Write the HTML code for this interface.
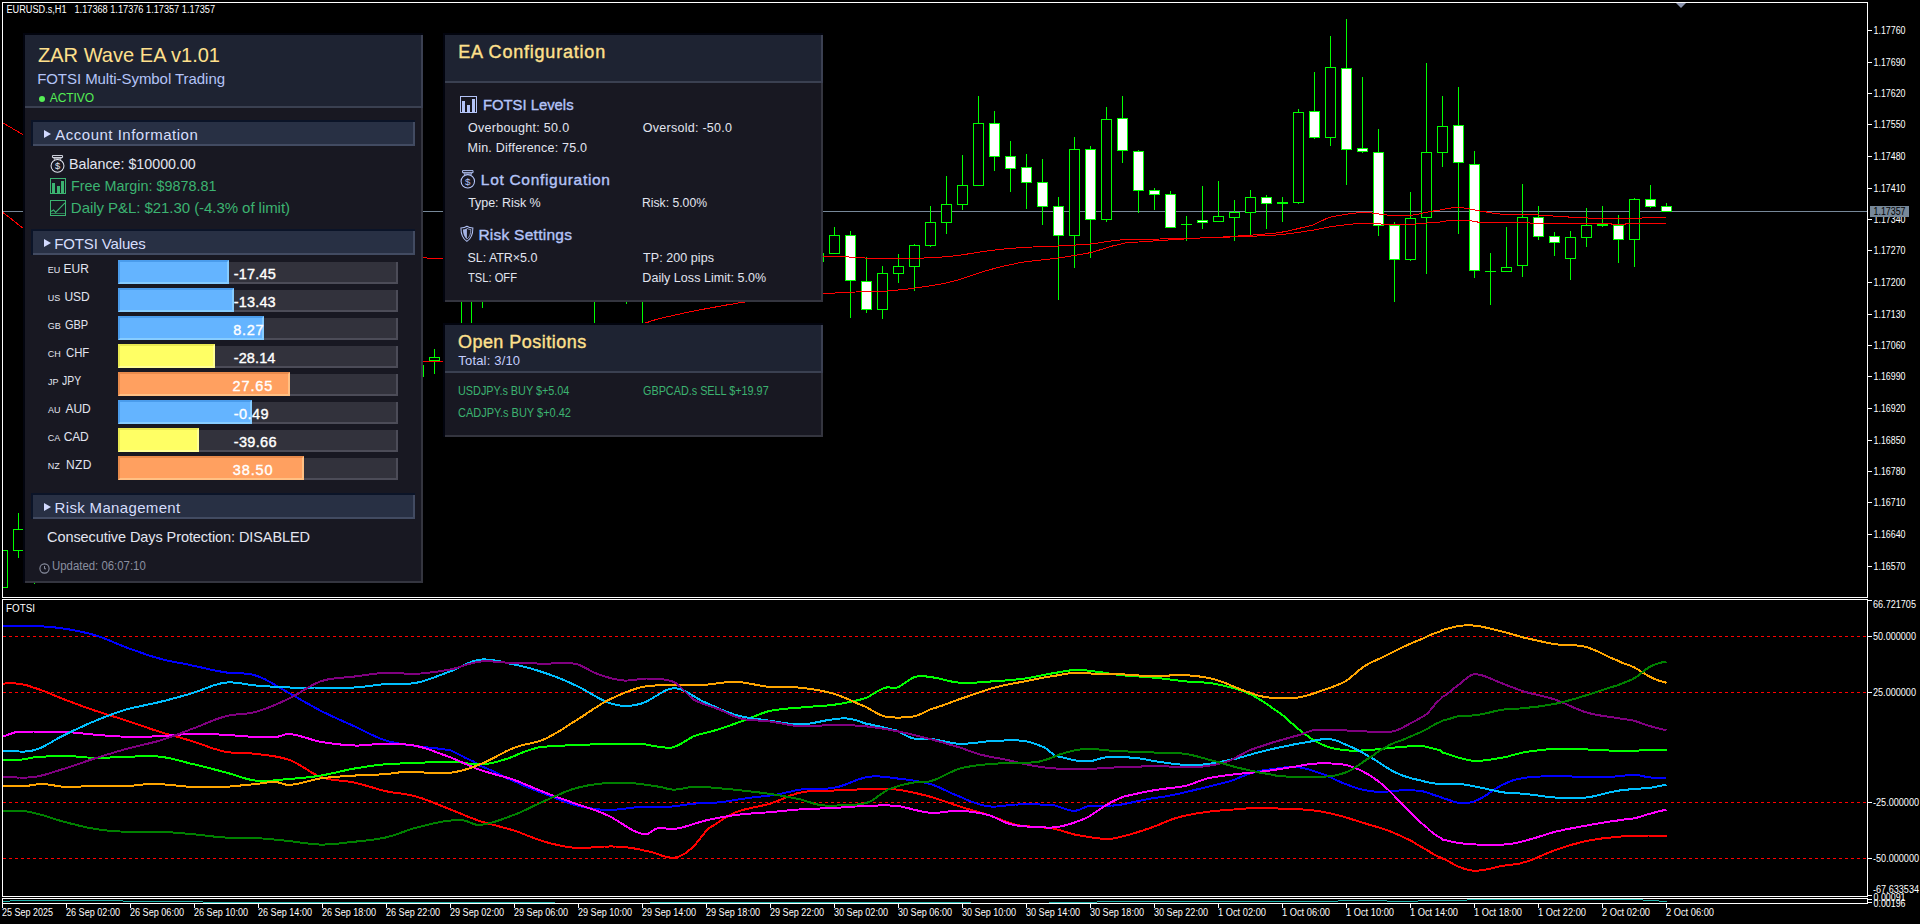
<!DOCTYPE html>
<html lang="en"><head><meta charset="utf-8"><title>EURUSD.s,H1 - ZAR Wave EA v1.01</title>
<style>
html,body{margin:0;padding:0;background:#000}
body{width:1920px;height:924px;position:relative;overflow:hidden;font-family:"Liberation Sans", sans-serif}
.panel{position:absolute;box-sizing:border-box;border:2px solid transparent;background:linear-gradient(#02040e,#02040e) 0 0/2px 100% no-repeat border-box,linear-gradient(#02040e,#02040e) 0 0/100% 2px no-repeat border-box,linear-gradient(#34353f,#34353f) 100% 0/2px 100% no-repeat border-box,linear-gradient(#34353f,#34353f) 0 100%/100% 2px no-repeat border-box,#181822 border-box}
.hd{position:absolute;left:0;top:0;right:0;box-sizing:border-box;background:#1e2332;border-bottom:2px solid #3a4051}
.hd:after{content:"";position:absolute;right:-2px;top:0;bottom:-2px;width:2px;background:#3b4052}
.t{position:absolute;white-space:nowrap;line-height:normal;transform-origin:0 0}
.ic{position:absolute;overflow:visible}
.sect{position:absolute;left:6px;width:384px;height:26px;box-sizing:border-box;background:linear-gradient(#0b1428,#0b1428) 0 0/2px 100% no-repeat,linear-gradient(#0b1428,#0b1428) 0 0/100% 2px no-repeat,linear-gradient(#424b62,#424b62) 100% 0/2px 100% no-repeat,linear-gradient(#424b62,#424b62) 0 100%/100% 2px no-repeat,#283044}
.tri{position:absolute;left:13px;top:10px;width:0;height:0;border-left:7px solid #d2daff;border-top:4px solid transparent;border-bottom:4px solid transparent}
.track{position:absolute;left:93px;width:280px;height:22px;box-sizing:border-box;background:#32323c;border-style:solid;border-width:0 2px 2px 0;border-color:#4c4c58}
.bar{position:absolute;left:93px;height:24px;box-sizing:border-box;border-style:solid;border-width:2px}
.bar.b{background:#64b4ff;border-color:#4a9cec #86ccff #86ccff #4a9cec}
.bar.y{background:#ffff64;border-color:#e8e850 #ffff96 #ffff96 #e8e850}
.bar.o{background:#ffa060;border-color:#e88a4c #ffc084 #ffc084 #e88a4c}
.dot{position:absolute;left:14px;top:60.7px;width:6px;height:6px;border-radius:50%;background:#55ee55}
</style></head><body>
<svg width="1920" height="924" viewBox="0 0 1920 924" style="position:absolute;left:0;top:0" font-family='Liberation Sans, sans-serif'>
<rect x="2" y="2" width="1866" height="1" fill="#ffffff"/>
<rect x="2" y="2" width="1" height="596" fill="#ffffff"/>
<rect x="1867" y="2" width="1" height="596" fill="#ffffff"/>
<rect x="2" y="597" width="1866" height="1" fill="#ffffff"/>
<rect x="2" y="599" width="1866" height="1" fill="#ffffff"/>
<rect x="2" y="599" width="1" height="298" fill="#ffffff"/>
<rect x="1867" y="599" width="1" height="298" fill="#ffffff"/>
<rect x="2" y="896" width="1866" height="1" fill="#ffffff"/>
<rect x="2" y="898" width="1866" height="1" fill="#ffffff"/>
<rect x="2" y="898" width="1" height="6" fill="#ffffff"/>
<rect x="1867" y="898" width="1" height="6" fill="#ffffff"/>
<rect x="2" y="903" width="1866" height="1" fill="#ffffff"/>
<clipPath id="mc"><rect x="3" y="3" width="1864" height="594"/></clipPath><g clip-path="url(#mc)">
<rect x="3" y="211" width="1864" height="1" fill="#778899"/>
<rect x="2" y="550" width="1" height="38" fill="#00ff00"/>
<rect x="-3" y="550" width="11" height="38" fill="#00ff00"/>
<rect x="-2" y="551" width="9" height="36" fill="#000000"/>
<rect x="18" y="513" width="1" height="45" fill="#00ff00"/>
<rect x="13" y="529" width="11" height="22" fill="#00ff00"/>
<rect x="14" y="530" width="9" height="20" fill="#000000"/>
<rect x="34" y="540" width="1" height="44" fill="#00ff00"/>
<rect x="29" y="545" width="11" height="25" fill="#00ff00"/>
<rect x="30" y="546" width="9" height="23" fill="#000000"/>
<rect x="418" y="360" width="1" height="20" fill="#00ff00"/>
<rect x="413" y="365" width="11" height="12" fill="#00ff00"/>
<rect x="414" y="366" width="9" height="10" fill="#000000"/>
<rect x="434" y="349" width="1" height="25" fill="#00ff00"/>
<rect x="429" y="357" width="11" height="4" fill="#00ff00"/>
<rect x="430" y="358" width="9" height="2" fill="#000000"/>
<rect x="466" y="240" width="1" height="100" fill="#00ff00"/>
<rect x="461" y="250" width="11" height="82" fill="#00ff00"/>
<rect x="462" y="251" width="9" height="80" fill="#000000"/>
<rect x="482" y="250" width="1" height="58" fill="#00ff00"/>
<rect x="477" y="260" width="11" height="30" fill="#00ff00"/>
<rect x="478" y="261" width="9" height="28" fill="#000000"/>
<rect x="594" y="280" width="1" height="55" fill="#00ff00"/>
<rect x="589" y="285" width="11" height="11" fill="#00ff00"/>
<rect x="590" y="286" width="9" height="9" fill="#000000"/>
<rect x="626" y="270" width="1" height="34" fill="#00ff00"/>
<rect x="621" y="275" width="11" height="15" fill="#00ff00"/>
<rect x="622" y="276" width="9" height="13" fill="#000000"/>
<rect x="642" y="280" width="1" height="55" fill="#00ff00"/>
<rect x="637" y="285" width="11" height="15" fill="#00ff00"/>
<rect x="638" y="286" width="9" height="13" fill="#000000"/>
<rect x="818" y="250" width="1" height="12" fill="#00ff00"/>
<rect x="813" y="253" width="11" height="9" fill="#00ff00"/>
<rect x="814" y="254" width="9" height="7" fill="#000000"/>
<rect x="834" y="227" width="1" height="27" fill="#00ff00"/>
<rect x="829" y="235" width="11" height="19" fill="#00ff00"/>
<rect x="830" y="236" width="9" height="17" fill="#000000"/>
<rect x="850" y="231" width="1" height="87" fill="#00ff00"/>
<rect x="845" y="235" width="11" height="46" fill="#00ff00"/>
<rect x="846" y="236" width="9" height="44" fill="#ffffff"/>
<rect x="866" y="257" width="1" height="56" fill="#00ff00"/>
<rect x="861" y="281" width="11" height="29" fill="#00ff00"/>
<rect x="862" y="282" width="9" height="27" fill="#ffffff"/>
<rect x="882" y="266" width="1" height="53" fill="#00ff00"/>
<rect x="877" y="273" width="11" height="37" fill="#00ff00"/>
<rect x="878" y="274" width="9" height="35" fill="#000000"/>
<rect x="898" y="254" width="1" height="29" fill="#00ff00"/>
<rect x="893" y="266" width="11" height="8" fill="#00ff00"/>
<rect x="894" y="267" width="9" height="6" fill="#000000"/>
<rect x="914" y="244" width="1" height="47" fill="#00ff00"/>
<rect x="909" y="245" width="11" height="22" fill="#00ff00"/>
<rect x="910" y="246" width="9" height="20" fill="#000000"/>
<rect x="930" y="206" width="1" height="41" fill="#00ff00"/>
<rect x="925" y="222" width="11" height="24" fill="#00ff00"/>
<rect x="926" y="223" width="9" height="22" fill="#000000"/>
<rect x="946" y="176" width="1" height="58" fill="#00ff00"/>
<rect x="941" y="204" width="11" height="19" fill="#00ff00"/>
<rect x="942" y="205" width="9" height="17" fill="#000000"/>
<rect x="962" y="155" width="1" height="55" fill="#00ff00"/>
<rect x="957" y="185" width="11" height="20" fill="#00ff00"/>
<rect x="958" y="186" width="9" height="18" fill="#000000"/>
<rect x="978" y="96" width="1" height="90" fill="#00ff00"/>
<rect x="973" y="123" width="11" height="63" fill="#00ff00"/>
<rect x="974" y="124" width="9" height="61" fill="#000000"/>
<rect x="994" y="111" width="1" height="60" fill="#00ff00"/>
<rect x="989" y="123" width="11" height="34" fill="#00ff00"/>
<rect x="990" y="124" width="9" height="32" fill="#ffffff"/>
<rect x="1010" y="141" width="1" height="51" fill="#00ff00"/>
<rect x="1005" y="156" width="11" height="13" fill="#00ff00"/>
<rect x="1006" y="157" width="9" height="11" fill="#ffffff"/>
<rect x="1026" y="154" width="1" height="55" fill="#00ff00"/>
<rect x="1021" y="167" width="11" height="16" fill="#00ff00"/>
<rect x="1022" y="168" width="9" height="14" fill="#ffffff"/>
<rect x="1042" y="159" width="1" height="66" fill="#00ff00"/>
<rect x="1037" y="182" width="11" height="25" fill="#00ff00"/>
<rect x="1038" y="183" width="9" height="23" fill="#ffffff"/>
<rect x="1058" y="197" width="1" height="103" fill="#00ff00"/>
<rect x="1053" y="206" width="11" height="30" fill="#00ff00"/>
<rect x="1054" y="207" width="9" height="28" fill="#ffffff"/>
<rect x="1074" y="137" width="1" height="131" fill="#00ff00"/>
<rect x="1069" y="149" width="11" height="87" fill="#00ff00"/>
<rect x="1070" y="150" width="9" height="85" fill="#000000"/>
<rect x="1090" y="146" width="1" height="112" fill="#00ff00"/>
<rect x="1085" y="149" width="11" height="71" fill="#00ff00"/>
<rect x="1086" y="150" width="9" height="69" fill="#ffffff"/>
<rect x="1106" y="107" width="1" height="115" fill="#00ff00"/>
<rect x="1101" y="119" width="11" height="101" fill="#00ff00"/>
<rect x="1102" y="120" width="9" height="99" fill="#000000"/>
<rect x="1122" y="96" width="1" height="67" fill="#00ff00"/>
<rect x="1117" y="118" width="11" height="33" fill="#00ff00"/>
<rect x="1118" y="119" width="9" height="31" fill="#ffffff"/>
<rect x="1138" y="150" width="1" height="63" fill="#00ff00"/>
<rect x="1133" y="151" width="11" height="40" fill="#00ff00"/>
<rect x="1134" y="152" width="9" height="38" fill="#ffffff"/>
<rect x="1154" y="188" width="1" height="22" fill="#00ff00"/>
<rect x="1149" y="190" width="11" height="5" fill="#00ff00"/>
<rect x="1150" y="191" width="9" height="3" fill="#ffffff"/>
<rect x="1170" y="191" width="1" height="37" fill="#00ff00"/>
<rect x="1165" y="194" width="11" height="34" fill="#00ff00"/>
<rect x="1166" y="195" width="9" height="32" fill="#ffffff"/>
<rect x="1186" y="216" width="1" height="25" fill="#00ff00"/>
<rect x="1181" y="224" width="11" height="1" fill="#00ff00"/>
<rect x="1202" y="186" width="1" height="43" fill="#00ff00"/>
<rect x="1197" y="220" width="11" height="3" fill="#00ff00"/>
<rect x="1198" y="221" width="9" height="1" fill="#ffffff"/>
<rect x="1218" y="181" width="1" height="41" fill="#00ff00"/>
<rect x="1213" y="216" width="11" height="6" fill="#00ff00"/>
<rect x="1214" y="217" width="9" height="4" fill="#000000"/>
<rect x="1234" y="200" width="1" height="41" fill="#00ff00"/>
<rect x="1229" y="212" width="11" height="6" fill="#00ff00"/>
<rect x="1230" y="213" width="9" height="4" fill="#000000"/>
<rect x="1250" y="190" width="1" height="47" fill="#00ff00"/>
<rect x="1245" y="197" width="11" height="16" fill="#00ff00"/>
<rect x="1246" y="198" width="9" height="14" fill="#000000"/>
<rect x="1266" y="195" width="1" height="34" fill="#00ff00"/>
<rect x="1261" y="197" width="11" height="7" fill="#00ff00"/>
<rect x="1262" y="198" width="9" height="5" fill="#ffffff"/>
<rect x="1282" y="197" width="1" height="25" fill="#00ff00"/>
<rect x="1277" y="202" width="11" height="2" fill="#00ff00"/>
<rect x="1298" y="109" width="1" height="95" fill="#00ff00"/>
<rect x="1293" y="112" width="11" height="91" fill="#00ff00"/>
<rect x="1294" y="113" width="9" height="89" fill="#000000"/>
<rect x="1314" y="72" width="1" height="67" fill="#00ff00"/>
<rect x="1309" y="111" width="11" height="27" fill="#00ff00"/>
<rect x="1310" y="112" width="9" height="25" fill="#ffffff"/>
<rect x="1330" y="36" width="1" height="110" fill="#00ff00"/>
<rect x="1325" y="67" width="11" height="71" fill="#00ff00"/>
<rect x="1326" y="68" width="9" height="69" fill="#000000"/>
<rect x="1346" y="19" width="1" height="166" fill="#00ff00"/>
<rect x="1341" y="68" width="11" height="82" fill="#00ff00"/>
<rect x="1342" y="69" width="9" height="80" fill="#ffffff"/>
<rect x="1362" y="77" width="1" height="76" fill="#00ff00"/>
<rect x="1357" y="148" width="11" height="4" fill="#00ff00"/>
<rect x="1358" y="149" width="9" height="2" fill="#ffffff"/>
<rect x="1378" y="129" width="1" height="107" fill="#00ff00"/>
<rect x="1373" y="152" width="11" height="74" fill="#00ff00"/>
<rect x="1374" y="153" width="9" height="72" fill="#ffffff"/>
<rect x="1394" y="222" width="1" height="80" fill="#00ff00"/>
<rect x="1389" y="225" width="11" height="35" fill="#00ff00"/>
<rect x="1390" y="226" width="9" height="33" fill="#ffffff"/>
<rect x="1410" y="192" width="1" height="69" fill="#00ff00"/>
<rect x="1405" y="218" width="11" height="42" fill="#00ff00"/>
<rect x="1406" y="219" width="9" height="40" fill="#000000"/>
<rect x="1426" y="63" width="1" height="211" fill="#00ff00"/>
<rect x="1421" y="152" width="11" height="66" fill="#00ff00"/>
<rect x="1422" y="153" width="9" height="64" fill="#000000"/>
<rect x="1442" y="96" width="1" height="71" fill="#00ff00"/>
<rect x="1437" y="126" width="11" height="27" fill="#00ff00"/>
<rect x="1438" y="127" width="9" height="25" fill="#000000"/>
<rect x="1458" y="87" width="1" height="147" fill="#00ff00"/>
<rect x="1453" y="125" width="11" height="38" fill="#00ff00"/>
<rect x="1454" y="126" width="9" height="36" fill="#ffffff"/>
<rect x="1474" y="151" width="1" height="127" fill="#00ff00"/>
<rect x="1469" y="164" width="11" height="107" fill="#00ff00"/>
<rect x="1470" y="165" width="9" height="105" fill="#ffffff"/>
<rect x="1490" y="253" width="1" height="52" fill="#00ff00"/>
<rect x="1485" y="271" width="11" height="1" fill="#00ff00"/>
<rect x="1506" y="227" width="1" height="45" fill="#00ff00"/>
<rect x="1501" y="267" width="11" height="5" fill="#00ff00"/>
<rect x="1502" y="268" width="9" height="3" fill="#000000"/>
<rect x="1522" y="184" width="1" height="93" fill="#00ff00"/>
<rect x="1517" y="217" width="11" height="49" fill="#00ff00"/>
<rect x="1518" y="218" width="9" height="47" fill="#000000"/>
<rect x="1538" y="206" width="1" height="34" fill="#00ff00"/>
<rect x="1533" y="217" width="11" height="20" fill="#00ff00"/>
<rect x="1534" y="218" width="9" height="18" fill="#ffffff"/>
<rect x="1554" y="232" width="1" height="24" fill="#00ff00"/>
<rect x="1549" y="236" width="11" height="7" fill="#00ff00"/>
<rect x="1550" y="237" width="9" height="5" fill="#ffffff"/>
<rect x="1570" y="231" width="1" height="49" fill="#00ff00"/>
<rect x="1565" y="237" width="11" height="22" fill="#00ff00"/>
<rect x="1566" y="238" width="9" height="20" fill="#000000"/>
<rect x="1586" y="208" width="1" height="39" fill="#00ff00"/>
<rect x="1581" y="225" width="11" height="13" fill="#00ff00"/>
<rect x="1582" y="226" width="9" height="11" fill="#000000"/>
<rect x="1602" y="206" width="1" height="21" fill="#00ff00"/>
<rect x="1597" y="224" width="11" height="2" fill="#00ff00"/>
<rect x="1618" y="215" width="1" height="48" fill="#00ff00"/>
<rect x="1613" y="225" width="11" height="15" fill="#00ff00"/>
<rect x="1614" y="226" width="9" height="13" fill="#ffffff"/>
<rect x="1634" y="198" width="1" height="69" fill="#00ff00"/>
<rect x="1629" y="199" width="11" height="41" fill="#00ff00"/>
<rect x="1630" y="200" width="9" height="39" fill="#000000"/>
<rect x="1650" y="185" width="1" height="23" fill="#00ff00"/>
<rect x="1645" y="199" width="11" height="8" fill="#00ff00"/>
<rect x="1646" y="200" width="9" height="6" fill="#ffffff"/>
<rect x="1666" y="203" width="1" height="9" fill="#00ff00"/>
<rect x="1661" y="206" width="11" height="6" fill="#00ff00"/>
<rect x="1662" y="207" width="9" height="4" fill="#ffffff"/>
<g shape-rendering="crispEdges">
<polyline points="-16.0,112.0 -11.2,114.0 -6.5,116.8 -1.8,120.0 3.0,123.0 7.8,125.8 12.5,128.5 17.2,131.2 22.0,134.0 26.8,136.1 31.5,137.7 36.2,140.2 41.0,145.0 45.2,146.4 49.3,148.0 53.5,149.7 57.6,151.5 61.8,153.4 65.9,155.4 70.1,157.5 74.3,159.6 78.4,161.9 82.6,164.1 86.7,166.5 90.9,168.8 95.1,171.2 99.2,173.5 103.4,175.9 107.5,178.2 111.7,180.5 115.8,182.8 120.0,185.0 124.1,186.3 128.1,187.6 132.2,189.0 136.2,190.4 140.3,191.8 144.4,193.2 148.4,194.6 152.5,196.0 156.6,197.5 160.6,198.9 164.7,200.4 168.8,201.8 172.8,203.3 176.9,204.7 180.9,206.2 185.0,207.6 189.1,209.1 193.1,210.5 197.2,211.9 201.2,213.3 205.3,214.7 209.4,216.0 213.4,217.3 217.5,218.7 221.6,219.9 225.6,221.2 229.7,222.4 233.8,223.6 237.8,224.8 241.9,225.9 245.9,227.0 250.0,228.0 254.0,229.3 258.0,230.5 262.0,231.7 266.0,232.9 270.0,234.0 274.0,235.1 278.0,236.1 282.0,237.1 286.0,238.1 290.0,239.0 294.0,239.9 298.0,240.8 302.0,241.6 306.0,242.5 310.0,243.3 314.0,244.0 318.0,244.8 322.0,245.5 326.0,246.2 330.0,246.9 334.0,247.5 338.0,248.2 342.0,248.8 346.0,249.4 350.0,250.0 354.1,250.8 358.1,251.5 362.2,252.2 366.2,252.8 370.3,253.3 374.3,253.8 378.4,254.3 382.4,254.7 386.5,255.1 390.6,255.4 394.6,255.7 398.7,256.0 402.7,256.3 406.8,256.6 410.8,256.8 414.9,257.0 418.9,257.3 423.0,257.5 427.0,258.0 431.0,258.2 435.0,258.1 439.0,258.1 443.0,258.3 447.0,258.4 451.1,258.5 455.1,258.6 459.1,258.7 463.2,258.8 467.2,258.9 471.2,259.1 475.3,259.2 479.3,259.4 483.3,259.5 487.4,259.7 491.4,259.8 495.4,260.0 499.5,260.1 503.5,260.3 507.6,260.4 511.6,260.6 515.6,260.7 519.7,260.9 523.7,261.0 527.7,261.2 531.8,261.3 535.8,261.4 539.8,261.5 543.9,261.7 547.9,261.8 551.9,261.8 556.0,261.9 560.0,262.0 564.0,262.1 568.0,262.1 572.0,262.2 576.0,262.2 580.0,262.2 584.0,262.3 588.0,262.3 592.0,262.4 596.0,262.4 600.0,262.4 604.0,262.5 608.0,262.5 612.0,262.5 616.0,262.5 620.0,262.5 624.0,262.5 628.0,262.6 632.0,262.6 636.0,262.6 640.0,262.6 644.0,262.6 648.0,262.5 652.0,262.5 656.0,262.5 660.0,262.5 664.0,262.5 668.0,262.4 672.0,262.4 676.0,262.4 680.0,262.3 684.0,262.3 688.0,262.2 692.0,262.1 696.0,262.1 700.0,262.0 704.1,261.9 708.2,261.8 712.3,261.7 716.4,261.5 720.5,261.4 724.6,261.2 728.7,261.0 732.8,260.8 736.9,260.6 741.0,260.4 745.1,260.2 749.2,260.0 753.3,259.8 757.4,259.6 761.5,259.4 765.6,259.1 769.7,258.9 773.8,258.7 777.9,258.5 782.0,258.3 786.1,258.1 790.2,257.9 794.3,257.7 798.4,257.5 802.5,257.3 806.6,257.2 810.7,257.0 814.8,256.9 818.9,256.8 823.0,256.7 827.0,256.3 831.0,256.3 835.0,256.4 839.0,256.6 843.0,256.7 847.2,256.9 851.5,257.2 855.8,257.5 860.0,257.7 865.0,258.0 870.0,258.2 874.2,258.2 878.3,258.3 882.5,258.3 886.7,258.3 890.8,258.3 895.0,258.4 899.2,258.4 903.3,258.4 907.5,258.4 911.7,258.3 915.8,258.3 920.0,258.2 924.1,258.0 928.2,257.9 932.4,257.7 936.5,257.4 940.6,257.1 944.8,256.8 948.9,256.4 953.0,256.0 957.2,255.5 961.5,254.9 965.8,254.3 970.0,253.6 974.2,252.9 978.5,252.2 982.8,251.6 987.0,251.0 991.1,250.5 995.2,250.0 999.4,249.6 1003.5,249.1 1007.6,248.7 1011.8,248.4 1015.9,248.0 1020.0,247.7 1024.2,247.4 1028.4,247.2 1032.7,247.0 1036.9,246.9 1041.1,246.7 1045.3,246.5 1049.6,246.4 1053.8,246.2 1058.0,246.0 1062.0,245.8 1066.0,245.6 1070.0,245.4 1074.0,245.1 1078.0,244.9 1082.0,244.6 1086.0,244.3 1090.0,244.0 1094.3,243.5 1098.6,242.9 1102.9,242.2 1107.1,241.6 1111.4,240.9 1115.7,240.4 1120.0,240.0 1125.0,239.5 1130.0,239.5 1134.3,239.4 1138.6,239.4 1142.9,239.3 1147.1,239.2 1151.4,239.2 1155.7,239.1 1160.0,239.0 1164.0,238.9 1168.0,238.8 1172.0,238.7 1176.0,238.6 1180.0,238.5 1184.0,238.4 1188.0,238.3 1192.0,238.2 1196.0,238.1 1200.0,238.0 1204.3,237.9 1208.6,237.8 1212.9,237.6 1217.1,237.5 1221.4,237.4 1225.7,237.2 1230.0,237.0 1234.2,236.9 1238.3,236.7 1242.5,236.6 1246.7,236.4 1250.8,236.2 1255.0,236.1 1259.2,235.9 1263.3,235.7 1267.5,235.5 1271.7,235.2 1275.8,235.0 1280.0,234.7 1284.1,234.2 1288.2,233.7 1292.4,233.2 1296.5,232.6 1300.6,232.0 1304.8,231.4 1308.9,230.8 1313.0,230.3 1317.2,229.3 1321.5,228.4 1325.8,227.6 1330.0,226.7 1334.1,226.2 1338.2,225.7 1342.4,225.2 1346.5,224.7 1350.6,224.2 1354.8,223.8 1358.9,223.5 1363.0,223.3 1367.5,223.3 1372.0,223.4 1376.5,223.7 1381.0,224.0 1385.5,224.3 1390.0,224.5 1394.6,224.6 1399.2,224.5 1403.8,224.5 1408.4,224.4 1413.0,224.2 1417.2,223.9 1421.5,223.5 1425.8,223.1 1430.0,222.8 1436.0,222.5 1440.0,222.0 1444.0,221.4 1448.0,220.7 1452.0,220.3 1456.7,220.1 1461.3,220.1 1466.0,220.3 1470.0,220.7 1474.0,221.4 1478.0,222.1 1482.0,222.5 1486.3,222.6 1490.5,222.6 1494.8,222.6 1499.1,222.6 1503.4,222.6 1507.6,222.5 1511.9,222.5 1516.2,222.5 1520.5,222.5 1524.7,222.5 1529.0,222.5 1532.0,223.7 1536.2,223.7 1540.3,223.7 1544.5,223.8 1548.6,223.8 1552.8,223.8 1556.9,223.8 1561.1,223.7 1565.3,223.7 1569.4,223.7 1573.6,223.7 1577.7,223.7 1581.9,223.7 1586.1,223.7 1590.2,223.7 1594.4,223.7 1598.5,223.7 1602.7,223.7 1606.8,223.7 1611.0,223.7 1613.0,224.7 1618.5,224.8 1624.0,224.7 1627.0,223.3 1631.3,223.2 1635.7,223.2 1640.0,223.2 1644.3,223.2 1648.7,223.2 1653.0,223.2 1657.3,223.3 1661.7,223.3 1666.0,223.3" fill="none" stroke="#ff0000" stroke-width="1" />
<polyline points="-16.0,197.6 -11.2,200.3 -6.5,204.1 -1.8,208.4 3.0,212.5 7.8,216.2 12.5,219.9 17.2,223.7 22.0,227.4 26.8,230.2 31.5,232.5 36.2,235.9 41.0,242.3 45.2,244.2 49.3,246.3 53.5,248.6 57.6,251.1 61.8,253.8 65.9,256.6 70.1,259.5 74.3,262.5 78.4,265.5 82.6,268.6 86.7,271.8 90.9,274.9 95.1,278.0 99.2,281.1 103.4,284.1 107.5,287.0 111.7,289.8 115.8,292.5 120.0,295.0 124.1,296.4 128.1,297.9 132.2,299.3 136.2,300.7 140.3,302.2 144.4,303.6 148.4,305.0 152.5,306.4 156.6,307.7 160.6,309.1 164.7,310.5 168.8,311.8 172.8,313.1 176.9,314.5 180.9,315.8 185.0,317.0 189.1,318.3 193.1,319.6 197.2,320.8 201.2,322.0 205.3,323.2 209.4,324.4 213.4,325.6 217.5,326.7 221.6,327.8 225.6,328.9 229.7,330.0 233.8,331.0 237.8,332.1 241.9,333.1 245.9,334.0 250.0,335.0 254.0,336.2 258.0,337.3 262.0,338.4 266.0,339.5 270.0,340.5 274.0,341.5 278.0,342.4 282.0,343.3 286.0,344.2 290.0,345.1 294.0,345.9 298.0,346.7 302.0,347.5 306.0,348.2 310.0,348.9 314.0,349.6 318.0,350.3 322.0,350.9 326.0,351.6 330.0,352.2 334.0,352.8 338.0,353.4 342.0,353.9 346.0,354.5 350.0,355.0 354.1,355.7 358.1,356.3 362.2,356.9 366.2,357.5 370.3,358.0 374.3,358.4 378.4,358.8 382.4,359.1 386.5,359.5 390.6,359.8 394.6,360.0 398.7,360.3 402.7,360.5 406.8,360.7 410.8,360.9 414.9,361.1 418.9,361.3 423.0,361.5 427.0,361.9 431.0,361.9 435.0,361.7 439.0,361.6 443.0,362.0 447.1,362.3 451.1,362.7 455.2,363.2 459.3,363.8 463.4,364.4 467.4,365.0 471.5,365.7 475.6,366.3 479.6,366.8 483.7,367.3 487.8,367.7 491.9,367.9 495.9,368.1 500.0,368.0 504.0,367.8 508.0,367.5 512.0,367.2 516.0,366.7 520.0,366.2 524.0,365.6 528.0,365.0 532.0,364.3 536.0,363.5 540.0,362.7 544.0,361.8 548.0,360.9 552.0,360.0 556.0,359.0 560.0,358.0 564.2,356.7 568.3,355.2 572.5,353.6 576.7,351.9 580.8,350.1 585.0,348.3 589.2,346.5 593.3,344.7 597.5,342.9 601.7,341.2 605.8,339.5 610.0,338.0 614.1,336.0 618.2,334.1 622.3,332.2 626.4,330.4 630.6,328.7 634.7,327.0 638.8,325.4 642.9,323.9 647.0,322.5 651.1,321.1 655.2,319.8 659.4,318.7 663.5,317.7 667.6,316.7 671.8,315.8 675.9,314.9 680.0,314.0 684.3,313.0 688.6,312.1 692.9,311.2 697.1,310.4 701.4,309.6 705.7,308.8 710.0,308.0 714.4,307.2 718.9,306.4 723.3,305.6 727.7,304.8 732.1,304.1 736.6,303.3 741.0,302.5 745.1,302.0 749.2,301.6 753.2,301.1 757.3,300.6 761.4,300.1 765.5,299.6 769.6,299.1 773.7,298.7 777.8,298.2 781.8,297.8 785.9,297.4 790.0,297.0 794.1,296.5 798.2,296.0 802.4,295.6 806.5,295.2 810.6,294.8 814.8,294.5 818.9,294.1 823.0,293.8 827.1,293.5 831.2,293.3 835.3,293.0 839.4,292.8 843.6,292.5 847.7,292.3 851.8,292.1 855.9,292.0 860.0,291.8 864.5,291.6 869.0,291.6 873.5,291.5 878.0,291.4 882.5,291.3 887.0,291.0 891.1,290.7 895.2,290.3 899.4,289.9 903.5,289.5 907.6,289.0 911.8,288.5 915.9,287.9 920.0,287.3 924.1,286.7 928.2,286.1 932.4,285.4 936.5,284.7 940.6,284.0 944.8,283.2 948.9,282.3 953.0,281.3 957.2,280.2 961.5,278.9 965.8,277.5 970.0,276.0 974.2,274.5 978.5,273.1 982.8,271.7 987.0,270.5 991.1,269.4 995.2,268.3 999.4,267.2 1003.5,266.2 1007.6,265.3 1011.8,264.4 1015.9,263.5 1020.0,262.7 1024.2,262.0 1028.4,261.5 1032.7,260.9 1036.9,260.4 1041.1,260.0 1045.3,259.5 1049.6,259.0 1053.8,258.5 1058.0,258.0 1062.0,257.4 1066.0,256.8 1070.0,256.2 1074.0,255.6 1078.0,254.9 1082.0,254.3 1086.0,253.5 1090.0,252.7 1094.3,251.6 1098.6,250.3 1102.9,249.0 1107.1,247.6 1111.4,246.3 1115.7,245.2 1120.0,244.3 1125.0,243.0 1130.0,242.5 1134.3,242.2 1138.6,242.0 1142.9,241.7 1147.1,241.4 1151.4,241.1 1155.7,240.8 1160.0,240.5 1164.0,240.3 1168.0,240.0 1172.0,239.8 1176.0,239.5 1180.0,239.2 1184.0,239.0 1188.0,238.7 1192.0,238.4 1196.0,238.2 1200.0,238.0 1204.3,237.8 1208.6,237.6 1212.9,237.4 1217.1,237.3 1221.4,237.1 1225.7,236.8 1230.0,236.5 1234.2,236.3 1238.3,236.0 1242.5,235.8 1246.7,235.5 1250.8,235.2 1255.0,234.9 1259.2,234.5 1263.3,234.2 1267.5,233.8 1271.7,233.4 1275.8,233.0 1280.0,232.5 1284.1,231.7 1288.2,230.9 1292.4,230.0 1296.5,229.0 1300.6,228.0 1304.8,227.0 1308.9,226.0 1313.0,225.0 1317.2,223.0 1321.5,220.9 1325.8,218.9 1330.0,217.2 1334.1,216.4 1338.2,215.6 1342.4,214.9 1346.5,214.2 1350.6,213.6 1354.8,213.1 1358.9,212.7 1363.0,212.5 1367.5,212.6 1372.0,213.0 1376.5,213.6 1381.0,214.3 1385.5,214.9 1390.0,215.3 1394.6,215.5 1399.2,215.5 1403.8,215.5 1408.4,215.3 1413.0,215.0 1417.2,214.3 1421.5,213.4 1425.8,212.4 1430.0,211.7 1436.0,210.5 1440.4,209.9 1444.8,209.1 1449.2,208.3 1453.6,207.7 1458.0,207.5 1462.2,207.8 1466.4,208.4 1470.6,209.2 1474.8,210.0 1479.0,210.8 1483.6,211.5 1488.2,212.3 1492.8,213.1 1497.4,213.7 1502.0,214.2 1506.5,214.4 1511.0,214.5 1515.5,214.5 1520.0,214.5 1524.5,214.4 1529.0,214.5 1533.2,214.7 1537.5,214.9 1541.8,215.2 1546.0,215.5 1550.0,215.8 1554.0,216.1 1558.0,216.4 1562.0,216.7 1566.2,216.9 1570.5,217.1 1574.8,217.3 1579.0,217.6 1583.2,217.8 1587.5,218.0 1591.8,218.2 1596.0,218.3 1600.1,218.4 1604.2,218.4 1608.3,218.4 1612.4,218.5 1616.5,218.5 1620.5,218.4 1624.6,218.4 1628.7,218.4 1632.8,218.4 1636.9,218.3 1641.0,218.3 1644.0,217.5 1648.4,217.4 1652.8,217.4 1657.2,217.5 1661.6,217.5 1666.0,217.5" fill="none" stroke="#ff0000" stroke-width="1" />
</g>
</g>
<polygon points="1676,3 1686,3 1681,8" fill="#8a93ad"/>
<line x1="3" y1="636.5" x2="1867" y2="636.5" stroke="#ff0000" stroke-width="1" stroke-dasharray="3 3" shape-rendering="crispEdges"/>
<line x1="3" y1="692.5" x2="1867" y2="692.5" stroke="#ff0000" stroke-width="1" stroke-dasharray="3 3" shape-rendering="crispEdges"/>
<line x1="3" y1="802.5" x2="1867" y2="802.5" stroke="#ff0000" stroke-width="1" stroke-dasharray="3 3" shape-rendering="crispEdges"/>
<line x1="3" y1="858.5" x2="1867" y2="858.5" stroke="#ff0000" stroke-width="1" stroke-dasharray="3 3" shape-rendering="crispEdges"/>
<g shape-rendering="crispEdges" stroke-linejoin="round">
<polyline points="2.8,625.9 4.9,625.9 6.9,625.9 9.0,625.8 11.1,625.8 13.1,625.8 15.2,625.7 17.3,625.7 19.3,625.7 21.4,625.7 23.4,625.7 25.5,625.7 27.6,625.7 29.6,625.7 31.7,625.8 33.8,625.9 35.8,626.0 37.9,626.1 40.0,626.2 42.0,626.3 44.1,626.5 46.1,626.6 48.2,626.8 50.3,627.0 52.3,627.1 54.4,627.4 56.5,627.6 58.5,627.8 60.6,628.1 62.7,628.4 64.7,628.7 66.8,629.0 68.8,629.4 70.9,629.7 73.0,630.1 75.0,630.5 77.1,630.9 79.2,631.3 81.2,631.7 83.3,632.2 85.3,632.7 87.4,633.2 89.5,633.7 91.5,634.2 93.6,634.8 95.7,635.4 97.7,636.1 99.8,636.8 101.9,637.5 103.9,638.3 106.0,639.1 108.0,639.9 110.1,640.8 112.2,641.6 114.2,642.5 116.3,643.4 118.4,644.2 120.4,645.1 122.5,645.9 124.6,646.8 126.6,647.5 128.7,648.3 130.8,649.0 132.9,649.8 135.1,650.5 137.2,651.3 139.3,652.0 141.4,652.8 143.5,653.5 145.6,654.3 147.7,655.0 149.8,655.7 151.9,656.3 154.1,657.0 156.2,657.6 158.3,658.2 160.4,658.8 162.4,659.4 164.5,659.9 166.6,660.4 168.6,660.9 170.7,661.3 172.8,661.7 174.8,662.1 176.9,662.5 179.0,662.9 181.0,663.2 183.1,663.6 185.1,664.0 187.2,664.4 189.3,664.8 191.3,665.3 193.4,665.7 195.6,666.1 197.7,666.6 199.8,667.1 201.9,667.6 204.0,668.0 206.1,668.5 208.2,669.0 210.3,669.5 212.4,669.9 214.5,670.4 216.7,670.8 218.8,671.2 220.9,671.6 223.0,672.0 225.1,672.3 227.2,672.6 229.2,672.8 231.3,673.0 233.4,673.1 235.4,673.2 237.5,673.2 239.5,673.3 241.6,673.4 243.7,673.5 245.7,673.6 247.8,673.8 249.9,674.1 251.9,674.5 254.0,675.0 256.0,675.7 258.2,676.4 260.3,677.2 262.4,678.1 264.5,679.1 266.6,680.2 268.7,681.3 270.8,682.5 272.9,683.7 275.0,684.9 277.2,686.2 279.3,687.4 281.4,688.7 283.5,689.9 285.6,691.1 287.7,692.3 289.8,693.4 291.9,694.6 293.9,695.8 296.0,696.9 298.1,698.1 300.1,699.3 302.2,700.5 304.3,701.7 306.3,702.9 308.4,704.0 310.4,705.2 312.5,706.3 314.6,707.5 316.6,708.6 318.7,709.7 320.8,710.9 322.9,711.9 325.0,712.9 327.1,713.9 329.2,714.9 331.3,715.9 333.4,716.9 335.5,717.8 337.6,718.8 339.8,719.8 341.9,720.7 344.0,721.7 346.1,722.6 348.2,723.5 350.3,724.5 352.4,725.4 354.5,726.3 356.6,727.3 358.7,728.3 360.7,729.4 362.8,730.4 364.8,731.4 366.9,732.5 369.0,733.5 371.0,734.5 373.1,735.4 375.2,736.4 377.2,737.3 379.3,738.1 381.4,739.0 383.4,739.7 385.5,740.4 387.5,741.0 389.6,741.6 391.7,742.1 393.7,742.5 395.8,743.0 397.9,743.3 399.9,743.7 402.0,744.0 404.1,744.3 406.1,744.6 408.2,744.8 410.2,745.1 412.3,745.4 414.4,745.7 416.4,746.0 418.5,746.3 420.7,746.6 422.8,746.9 424.9,747.1 427.0,747.4 429.1,747.6 431.2,747.8 433.3,748.0 435.4,748.3 437.5,748.5 439.6,748.8 441.8,749.0 443.9,749.3 446.0,749.6 448.1,749.9 450.2,750.2 452.2,751.1 454.2,752.0 456.2,753.0 458.2,754.0 460.2,755.1 462.3,756.2 464.3,757.3 466.5,758.4 468.8,759.4 471.0,760.4 473.3,761.5 475.5,762.8 477.8,764.1 480.0,765.7 482.1,766.5 484.2,767.3 486.3,768.2 488.4,769.2 490.6,770.1 492.7,771.1 494.8,772.2 496.9,773.2 499.0,774.2 501.1,775.3 503.2,776.3 505.3,777.4 507.4,778.4 509.5,779.3 511.7,780.3 513.8,781.2 515.8,782.1 517.9,783.0 520.0,783.9 522.0,784.8 524.1,785.7 526.1,786.5 528.2,787.4 530.3,788.2 532.3,789.0 534.4,789.8 536.5,790.7 538.5,791.5 540.6,792.3 542.7,793.1 544.7,793.9 546.8,794.7 548.8,795.5 550.9,796.3 553.0,797.1 555.0,798.0 557.1,798.8 559.2,799.6 561.2,800.4 563.3,801.1 565.3,801.9 567.4,802.6 569.5,803.3 571.5,803.9 573.6,804.6 575.7,805.1 577.7,805.6 579.8,806.1 581.9,806.6 583.9,807.1 586.0,807.5 588.0,807.9 590.1,808.2 592.2,808.5 594.2,808.8 596.3,809.1 598.4,809.3 600.4,809.5 602.5,809.7 604.6,809.8 606.6,809.9 608.7,809.9 610.8,809.9 612.9,809.8 615.1,809.7 617.2,809.5 619.3,809.3 621.4,809.0 623.5,808.8 625.6,808.5 627.7,808.3 629.8,808.0 631.9,807.8 634.1,807.5 636.2,807.4 638.3,807.2 640.4,807.1 642.5,807.0 644.6,807.0 646.7,807.0 648.8,807.0 650.9,807.1 653.0,807.1 655.2,807.2 657.3,807.2 659.4,807.3 661.5,807.2 663.6,807.2 665.7,807.1 667.7,806.9 669.7,806.8 671.7,806.5 673.7,806.3 675.8,806.0 677.8,805.8 679.8,805.5 681.8,805.2 683.8,804.9 685.8,804.6 687.8,804.4 689.8,804.1 691.8,803.9 693.8,803.7 696.0,803.5 698.1,803.4 700.2,803.3 702.3,803.2 704.4,803.1 706.5,803.1 708.6,803.0 710.7,802.9 712.8,802.8 714.9,802.7 717.1,802.5 719.2,802.3 721.2,802.1 723.2,801.8 725.2,801.6 727.2,801.3 729.2,801.0 731.2,800.6 733.2,800.3 735.2,800.0 737.3,799.6 739.3,799.3 741.3,799.0 743.3,798.7 745.3,798.4 747.3,798.1 749.3,797.8 751.3,797.6 753.3,797.3 755.3,797.1 757.4,796.9 759.4,796.7 761.4,796.5 763.4,796.3 765.4,796.0 767.4,795.8 769.4,795.6 771.4,795.3 773.4,795.0 775.4,794.7 777.5,794.4 779.5,794.0 781.5,793.6 783.5,793.1 785.5,792.7 787.5,792.2 789.5,791.8 791.5,791.3 793.5,790.9 795.5,790.4 797.5,790.0 799.6,789.7 801.6,789.4 803.6,789.1 805.6,788.9 807.7,788.7 809.8,788.7 811.8,788.6 813.9,788.6 816.0,788.7 818.0,788.7 820.1,788.7 822.1,788.7 824.2,788.7 826.3,788.6 828.3,788.5 830.4,788.3 832.5,788.0 834.5,787.7 836.6,787.2 838.8,786.7 840.9,786.1 843.0,785.4 845.1,784.6 847.2,783.8 849.3,783.0 851.4,782.1 853.5,781.3 855.6,780.5 857.7,779.7 859.9,779.0 862.0,778.4 864.1,777.8 866.2,777.3 868.3,777.0 870.3,776.7 872.3,776.5 874.3,776.4 876.3,776.4 878.3,776.4 880.4,776.5 882.4,776.7 884.4,776.8 886.4,777.1 888.4,777.3 890.4,777.6 892.4,777.9 894.4,778.1 896.4,778.4 898.5,778.6 900.7,778.8 902.8,779.1 904.9,779.3 907.0,779.6 909.1,779.9 911.2,780.2 913.3,780.5 915.4,780.8 917.5,781.2 919.6,781.6 921.8,782.0 923.9,782.5 926.0,782.9 928.1,783.5 930.2,784.0 932.3,784.7 934.5,785.5 936.6,786.3 938.7,787.2 940.8,788.2 943.0,789.2 945.1,790.2 947.2,791.2 949.4,792.2 951.5,793.2 953.6,794.1 955.7,795.0 957.9,795.9 960.0,796.7 962.0,797.6 964.1,798.6 966.1,799.5 968.2,800.3 970.2,801.2 972.3,802.0 974.3,802.7 976.4,803.4 978.4,804.1 980.5,804.6 982.5,805.1 984.5,805.7 986.5,806.1 988.5,806.4 990.5,806.5 992.6,806.6 994.6,806.6 996.6,806.5 998.7,806.4 1000.8,806.2 1002.9,805.9 1005.0,805.6 1007.1,805.3 1009.2,804.9 1011.4,804.7 1013.5,804.6 1015.5,804.5 1017.6,804.5 1019.7,804.4 1021.8,804.4 1023.8,804.4 1025.9,804.4 1028.0,804.4 1030.0,804.3 1032.1,804.4 1034.2,804.4 1036.3,804.4 1038.3,804.4 1040.4,804.5 1042.5,804.5 1044.6,804.6 1046.6,804.7 1048.7,804.8 1050.8,805.0 1052.9,805.1 1055.0,805.5 1057.1,806.1 1059.2,806.8 1061.3,807.5 1063.4,808.3 1065.5,809.0 1067.6,809.7 1069.7,810.2 1071.8,810.6 1074.0,810.7 1076.2,810.6 1078.4,810.0 1080.6,809.2 1082.8,808.3 1085.0,807.3 1087.2,806.5 1089.4,806.0 1091.4,805.8 1093.5,805.7 1095.5,805.6 1097.5,805.6 1099.5,805.6 1101.5,805.6 1103.5,805.6 1105.5,805.6 1107.5,805.6 1109.5,805.6 1111.5,805.5 1113.5,805.5 1115.6,805.3 1117.6,805.1 1119.6,804.9 1121.6,804.5 1123.6,804.2 1125.6,803.8 1127.6,803.4 1129.6,803.0 1131.6,802.5 1133.6,802.1 1135.7,801.6 1137.7,801.1 1139.7,800.7 1141.7,800.3 1143.7,799.9 1145.7,799.5 1147.8,799.1 1149.9,798.7 1152.0,798.4 1154.1,798.1 1156.3,797.8 1158.4,797.5 1160.5,797.2 1162.6,796.8 1164.7,796.5 1166.8,796.1 1168.9,795.7 1171.0,795.3 1173.1,794.9 1175.2,794.5 1177.2,794.0 1179.3,793.6 1181.3,793.1 1183.4,792.7 1185.5,792.2 1187.5,791.7 1189.6,791.2 1191.7,790.7 1193.7,790.2 1195.8,789.7 1197.9,789.2 1199.9,788.7 1202.0,788.2 1204.0,787.7 1206.0,787.2 1208.0,786.7 1210.0,786.3 1212.0,785.8 1214.0,785.3 1216.0,784.8 1218.1,784.3 1220.1,783.8 1222.1,783.3 1224.1,782.8 1226.1,782.3 1228.1,781.7 1230.1,781.2 1232.2,780.5 1234.2,779.7 1236.3,778.9 1238.3,778.0 1240.3,777.2 1242.4,776.3 1244.4,775.5 1246.5,774.7 1248.5,774.0 1250.6,773.3 1252.6,772.8 1254.7,772.1 1256.8,771.5 1259.0,771.1 1261.1,770.7 1263.2,770.3 1265.3,770.0 1267.4,769.7 1269.5,769.4 1271.5,769.2 1273.5,768.9 1275.5,768.7 1277.5,768.4 1279.6,768.1 1281.6,767.8 1283.6,767.6 1285.6,767.4 1287.6,767.2 1289.6,767.1 1291.6,767.0 1293.6,767.0 1295.6,767.0 1297.6,767.1 1299.8,767.4 1301.9,767.7 1304.0,768.2 1306.1,768.7 1308.2,769.3 1310.3,769.9 1312.4,770.6 1314.5,771.3 1316.6,772.0 1318.8,772.7 1320.9,773.4 1323.0,774.2 1325.0,775.0 1327.1,775.8 1329.1,776.7 1331.2,777.7 1333.2,778.7 1335.2,779.6 1337.3,780.6 1339.3,781.5 1341.4,782.4 1343.4,783.2 1345.5,784.0 1347.7,784.9 1349.9,785.7 1352.0,786.5 1354.2,787.3 1356.4,788.0 1358.6,788.6 1360.8,789.2 1363.0,789.7 1365.2,790.2 1367.3,790.6 1369.4,791.0 1371.5,791.3 1373.6,791.5 1375.7,791.7 1377.8,791.8 1379.9,791.9 1382.1,791.9 1384.2,791.8 1386.3,791.7 1388.4,791.5 1390.5,791.3 1392.6,791.0 1394.7,790.8 1396.8,790.6 1398.9,790.5 1401.0,790.4 1403.0,790.4 1405.1,790.4 1407.1,790.3 1409.2,790.3 1411.2,790.3 1413.3,790.4 1415.3,790.5 1417.4,790.6 1419.4,790.8 1421.5,791.0 1423.5,791.5 1425.6,792.0 1427.6,792.7 1429.7,793.4 1431.8,794.2 1433.8,794.9 1435.9,795.6 1438.0,796.2 1440.0,796.7 1442.5,798.1 1444.6,798.6 1446.7,799.2 1448.8,799.9 1451.0,800.7 1453.1,801.5 1455.2,802.1 1457.3,802.6 1459.4,802.9 1461.5,803.0 1463.6,803.1 1465.7,803.1 1467.8,802.9 1469.9,802.6 1472.1,802.1 1474.2,801.4 1476.3,800.3 1478.3,799.6 1480.3,798.6 1482.3,797.6 1484.3,796.4 1486.3,795.1 1488.3,793.8 1490.3,792.4 1492.4,791.0 1494.4,789.7 1496.4,788.3 1498.4,787.1 1500.4,785.9 1502.4,784.9 1504.4,784.0 1506.6,782.9 1508.8,781.9 1511.0,781.0 1513.2,780.3 1515.4,779.7 1517.5,779.2 1519.7,778.7 1521.9,778.3 1524.1,777.8 1526.2,777.6 1528.2,777.3 1530.3,777.2 1532.4,777.0 1534.4,776.8 1536.5,776.7 1538.6,776.6 1540.6,776.5 1542.7,776.4 1544.7,776.3 1546.8,776.3 1548.9,776.2 1550.9,776.2 1553.0,776.2 1555.1,776.1 1557.1,776.1 1559.2,776.1 1561.2,776.2 1563.3,776.2 1565.4,776.3 1567.4,776.4 1569.5,776.4 1571.6,776.5 1573.6,776.6 1575.7,776.7 1577.8,776.8 1579.8,776.9 1581.9,776.9 1583.9,777.0 1586.0,777.0 1588.1,777.0 1590.1,777.0 1592.2,777.0 1594.3,777.0 1596.3,776.9 1598.4,776.9 1600.5,776.9 1602.5,776.8 1604.6,776.8 1606.6,776.7 1608.7,776.7 1610.8,776.6 1612.8,776.6 1614.9,776.5 1617.0,776.4 1619.1,776.2 1621.2,776.0 1623.3,775.7 1625.4,775.4 1627.5,775.1 1629.6,774.9 1631.7,774.7 1633.8,774.7 1636.0,774.9 1638.1,775.2 1640.2,775.6 1642.3,776.0 1644.4,776.5 1646.5,776.9 1648.6,777.3 1650.7,777.5 1653.0,777.7 1655.2,777.7 1657.5,777.7 1659.7,777.7 1662.0,777.6 1664.2,777.6 1666.5,777.5" fill="none" stroke="#0000ff" stroke-width="2" />
<polyline points="2.8,683.6 4.8,683.5 6.8,683.4 8.8,683.3 10.9,683.3 12.9,683.3 14.9,683.3 16.9,683.6 19.0,683.8 21.1,684.1 23.2,684.5 25.3,684.9 27.4,685.5 29.5,686.1 31.7,686.9 33.8,687.8 35.8,688.3 37.9,689.0 40.0,689.7 42.0,690.4 44.1,691.2 46.1,692.0 48.2,692.8 50.3,693.7 52.3,694.5 54.4,695.4 56.5,696.3 58.5,697.1 60.6,698.0 62.7,698.8 64.7,699.6 66.8,700.4 68.8,701.1 70.9,701.9 73.0,702.7 75.0,703.4 77.1,704.2 79.2,705.0 81.2,705.7 83.3,706.5 85.3,707.2 87.4,708.0 89.5,708.7 91.5,709.4 93.6,710.1 95.7,710.9 97.7,711.5 99.8,712.2 101.9,712.9 103.9,713.5 106.0,714.2 108.0,714.8 110.1,715.5 112.2,716.1 114.2,716.7 116.3,717.4 118.4,718.0 120.4,718.7 122.5,719.3 124.6,720.0 126.6,720.7 128.7,721.4 130.8,722.1 132.9,722.8 135.1,723.5 137.2,724.2 139.3,724.9 141.4,725.6 143.5,726.4 145.6,727.1 147.7,727.8 149.8,728.6 151.9,729.3 154.1,730.0 156.2,730.6 158.3,731.3 160.4,732.0 162.4,732.6 164.5,733.3 166.6,733.9 168.6,734.5 170.7,735.1 172.8,735.6 174.8,736.2 176.9,736.8 179.0,737.3 181.0,737.9 183.1,738.5 185.1,739.1 187.2,739.7 189.3,740.3 191.3,741.0 193.4,741.6 195.6,742.3 197.7,743.0 199.8,743.7 201.9,744.5 204.0,745.2 206.1,746.0 208.2,746.7 210.3,747.5 212.4,748.2 214.5,748.9 216.7,749.5 218.8,750.1 220.9,750.7 223.0,751.2 225.1,751.7 227.2,752.0 229.2,752.3 231.3,752.6 233.4,752.8 235.4,752.9 237.5,753.0 239.5,753.0 241.6,753.1 243.7,753.1 245.7,753.2 247.8,753.2 249.9,753.3 251.9,753.5 254.0,753.7 256.0,753.9 258.2,754.2 260.3,754.4 262.4,754.7 264.5,754.9 266.6,755.2 268.7,755.5 270.8,755.8 272.9,756.1 275.0,756.4 277.2,756.8 279.3,757.2 281.4,757.7 283.5,758.2 285.6,758.8 287.7,759.4 289.8,760.1 291.9,760.9 293.9,761.9 296.0,763.0 298.1,764.1 300.1,765.3 302.2,766.6 304.3,767.9 306.3,769.2 308.4,770.5 310.4,771.8 312.5,773.0 314.6,774.1 316.6,775.2 318.7,776.2 320.8,777.0 322.9,777.6 325.0,778.2 327.1,778.7 329.2,779.1 331.3,779.5 333.4,779.8 335.5,780.1 337.6,780.3 339.8,780.6 341.9,780.8 344.0,781.0 346.1,781.3 348.2,781.5 350.3,781.8 352.4,782.2 354.5,782.6 356.6,783.1 358.7,783.6 360.7,784.2 362.8,784.7 364.8,785.3 366.9,785.9 369.0,786.5 371.0,787.1 373.1,787.7 375.2,788.3 377.2,788.9 379.3,789.5 381.4,790.0 383.4,790.6 385.5,791.0 387.5,791.5 389.6,791.9 391.7,792.2 393.7,792.6 395.8,792.9 397.9,793.2 399.9,793.4 402.0,793.7 404.1,794.0 406.1,794.4 408.2,794.7 410.2,795.1 412.3,795.6 414.4,796.1 416.4,796.7 418.5,797.3 420.7,797.9 422.8,798.6 424.9,799.4 427.0,800.1 429.1,800.9 431.2,801.8 433.3,802.6 435.4,803.5 437.5,804.3 439.6,805.2 441.8,806.1 443.9,806.9 446.0,807.7 448.1,808.6 450.2,809.3 452.3,810.2 454.5,811.1 456.6,812.0 458.7,812.8 460.8,813.7 463.0,814.6 465.1,815.5 467.2,816.3 469.4,817.2 471.5,818.0 473.6,818.8 475.7,819.6 477.9,820.4 480.0,821.2 482.1,821.8 484.2,822.4 486.3,823.0 488.4,823.6 490.6,824.2 492.7,824.7 494.8,825.3 496.9,825.8 499.0,826.4 501.1,826.9 503.2,827.5 505.3,828.0 507.4,828.6 509.5,829.2 511.7,829.8 513.8,830.4 515.8,831.1 517.9,831.9 520.0,832.6 522.0,833.4 524.1,834.2 526.1,835.0 528.2,835.9 530.3,836.7 532.3,837.5 534.4,838.2 536.5,839.0 538.5,839.7 540.6,840.4 542.7,841.1 544.7,841.7 546.8,842.3 548.8,842.8 550.9,843.4 553.0,843.9 555.0,844.4 557.1,844.9 559.2,845.4 561.2,845.8 563.3,846.2 565.3,846.6 567.4,846.9 569.5,847.2 571.5,847.5 573.6,847.7 575.7,847.9 577.7,848.0 579.8,848.1 581.9,848.1 583.9,848.0 586.0,847.9 588.0,847.8 590.1,847.6 592.2,847.4 594.2,847.2 596.3,847.1 598.4,846.9 600.4,846.7 602.5,846.6 604.6,846.5 606.6,846.5 608.8,846.5 611.0,846.4 613.2,846.5 615.4,846.5 617.6,846.6 619.7,846.7 621.9,846.9 624.1,847.1 626.3,847.3 628.4,847.6 630.4,847.9 632.5,848.2 634.5,848.5 636.5,848.9 638.6,849.3 640.6,849.7 642.7,850.2 644.7,850.6 646.8,851.1 648.8,851.5 650.9,852.0 653.0,852.6 655.2,853.3 657.3,854.0 659.4,854.7 661.5,855.5 663.6,856.1 665.7,856.7 667.8,857.2 669.9,857.6 672.0,857.7 674.1,857.7 676.3,857.4 678.4,856.8 680.5,855.9 682.6,854.8 684.7,853.6 686.8,852.1 688.9,850.5 691.0,848.7 693.1,846.8 695.3,844.5 697.4,842.0 699.5,839.4 701.6,836.7 703.7,834.0 705.8,831.4 707.9,829.0 709.9,827.7 711.9,826.4 713.9,825.1 716.0,823.8 718.0,822.4 720.0,821.2 722.0,819.9 724.0,818.6 726.0,817.4 728.0,816.3 730.0,815.2 732.0,814.1 734.0,813.1 736.0,812.1 738.2,811.4 740.3,810.7 742.4,810.1 744.5,809.5 746.6,809.0 748.7,808.5 750.8,808.0 752.9,807.6 755.0,807.1 757.2,806.7 759.3,806.3 761.4,805.8 763.5,805.3 765.6,804.8 767.7,804.3 769.8,803.7 771.9,803.0 773.9,802.3 776.0,801.5 778.1,800.7 780.1,799.8 782.2,799.0 784.3,798.1 786.3,797.3 788.4,796.4 790.4,795.6 792.5,794.9 794.6,794.2 796.6,793.5 798.7,792.9 800.8,792.5 802.9,792.1 805.0,791.8 807.1,791.5 809.2,791.3 811.3,791.1 813.4,791.0 815.5,790.9 817.6,790.9 819.8,790.8 821.9,790.8 824.0,790.7 826.1,790.7 828.2,790.7 830.3,790.6 832.4,790.6 834.5,790.5 836.6,790.4 838.7,790.3 840.7,790.2 842.8,790.1 844.9,790.0 847.0,789.9 849.0,789.8 851.1,789.7 853.2,789.7 855.3,789.6 857.3,789.5 859.4,789.4 861.5,789.4 863.6,789.3 865.6,789.2 867.7,789.2 869.8,789.1 871.8,789.1 873.9,789.1 876.0,789.0 878.0,789.0 880.1,788.9 882.1,788.9 884.2,788.8 886.2,788.8 888.2,788.9 890.3,789.0 892.3,789.1 894.4,789.3 896.4,789.6 898.5,789.9 900.7,790.2 902.8,790.5 904.9,790.9 907.0,791.3 909.1,791.7 911.2,792.1 913.3,792.6 915.4,793.1 917.5,793.5 919.6,794.0 921.8,794.6 923.9,795.1 926.0,795.6 928.1,796.1 930.2,796.7 932.3,797.3 934.5,797.9 936.6,798.6 938.7,799.3 940.8,800.0 943.0,800.8 945.1,801.5 947.2,802.3 949.4,803.0 951.5,803.7 953.6,804.5 955.7,805.2 957.9,805.9 960.0,806.5 962.0,807.2 964.0,807.8 966.0,808.4 968.0,809.0 970.0,809.6 972.1,810.2 974.1,810.7 976.1,811.3 978.1,811.9 980.1,812.5 982.1,813.1 984.1,813.7 986.1,814.3 988.1,815.0 990.1,815.6 992.2,816.3 994.2,817.1 996.2,817.9 998.2,818.6 1000.2,819.4 1002.2,820.2 1004.2,820.9 1006.2,821.7 1008.2,822.4 1010.2,823.1 1012.3,823.7 1014.3,824.3 1016.3,824.8 1018.3,825.2 1020.3,825.5 1022.4,825.7 1024.4,826.0 1026.4,826.2 1028.5,826.4 1030.5,826.6 1032.5,826.7 1034.6,826.9 1036.6,827.0 1038.6,827.1 1040.7,827.3 1042.7,827.4 1044.7,827.6 1046.8,827.8 1048.8,828.0 1050.8,828.2 1052.9,828.5 1054.9,828.9 1056.9,829.5 1059.0,830.0 1061.0,830.6 1063.1,831.2 1065.1,831.8 1067.2,832.4 1069.2,833.0 1071.3,833.6 1073.3,834.2 1075.4,834.7 1077.4,835.0 1079.5,835.4 1081.6,835.7 1083.6,836.1 1085.7,836.5 1087.7,836.8 1089.8,837.2 1091.9,837.5 1093.9,837.8 1096.0,838.1 1098.1,838.3 1100.1,838.5 1102.2,838.7 1104.3,838.8 1106.3,838.9 1108.4,838.9 1110.5,838.8 1112.6,838.6 1114.8,838.3 1116.9,837.8 1119.0,837.3 1121.1,836.7 1123.2,836.1 1125.2,835.6 1127.2,835.2 1129.2,834.7 1131.2,834.1 1133.2,833.5 1135.3,832.9 1137.3,832.3 1139.3,831.6 1141.3,831.0 1143.3,830.3 1145.3,829.6 1147.3,829.0 1149.3,828.3 1151.3,827.6 1153.4,826.8 1155.6,826.0 1157.7,825.2 1159.8,824.3 1161.9,823.4 1164.0,822.5 1166.1,821.7 1168.2,820.8 1170.3,820.0 1172.4,819.2 1174.5,818.5 1176.7,817.8 1178.7,817.2 1180.7,816.7 1182.7,816.2 1184.7,815.8 1186.7,815.3 1188.7,814.9 1190.7,814.5 1192.7,814.1 1194.7,813.8 1196.8,813.4 1198.8,813.1 1200.8,812.8 1202.8,812.5 1204.8,812.1 1206.9,811.9 1208.9,811.6 1211.0,811.4 1213.0,811.2 1215.1,810.9 1217.2,810.8 1219.2,810.6 1221.3,810.4 1223.4,810.2 1225.4,810.1 1227.5,809.9 1229.6,809.8 1231.6,809.6 1233.7,809.5 1235.7,809.3 1237.8,809.1 1239.8,809.0 1241.9,808.8 1243.9,808.6 1246.0,808.5 1248.0,808.4 1250.1,808.2 1252.1,808.1 1254.2,808.0 1256.2,808.0 1258.3,807.9 1260.4,807.9 1262.6,807.9 1264.8,807.9 1267.0,808.0 1269.2,808.1 1271.4,808.1 1273.6,808.3 1275.8,808.4 1278.0,808.5 1280.1,808.6 1282.2,808.6 1284.3,808.7 1286.4,808.8 1288.5,808.8 1290.6,808.9 1292.7,809.0 1294.8,809.1 1296.9,809.2 1299.1,809.3 1301.2,809.4 1303.3,809.5 1305.4,809.7 1307.5,809.8 1309.6,810.0 1311.7,810.2 1313.8,810.5 1315.9,810.8 1318.0,811.1 1320.2,811.4 1322.3,811.8 1324.4,812.1 1326.5,812.6 1328.6,813.0 1330.7,813.4 1332.8,813.9 1334.9,814.4 1337.0,815.0 1339.0,815.5 1341.1,816.0 1343.1,816.6 1345.1,817.1 1347.1,817.8 1349.1,818.4 1351.1,819.0 1353.1,819.7 1355.1,820.3 1357.1,821.0 1359.1,821.6 1361.2,822.2 1363.2,822.8 1365.2,823.4 1367.2,824.1 1369.3,824.7 1371.3,825.3 1373.4,825.9 1375.4,826.5 1377.5,827.1 1379.5,827.7 1381.5,828.4 1383.6,829.0 1385.6,829.7 1387.7,830.4 1389.7,831.2 1391.8,832.1 1393.8,832.9 1395.9,833.8 1397.9,834.7 1400.0,835.6 1402.0,836.6 1404.1,837.5 1406.1,838.5 1408.2,839.4 1410.2,840.3 1412.3,841.5 1414.4,842.8 1416.5,844.1 1418.6,845.4 1420.7,846.6 1422.9,847.9 1425.0,849.0 1427.1,850.1 1429.2,851.5 1431.4,852.9 1433.6,854.2 1435.7,855.3 1437.9,856.4 1440.0,857.2 1442.5,858.6 1444.6,859.3 1446.7,860.3 1448.8,861.4 1451.0,862.7 1453.1,863.9 1455.2,865.1 1457.3,866.1 1459.4,867.0 1461.5,867.8 1463.6,868.5 1465.7,869.1 1467.8,869.7 1469.9,870.2 1472.1,870.5 1474.2,870.7 1476.3,870.7 1478.3,870.6 1480.3,870.4 1482.3,870.1 1484.3,869.8 1486.3,869.4 1488.3,869.0 1490.3,868.6 1492.4,868.1 1494.4,867.7 1496.4,867.2 1498.4,866.7 1500.4,866.3 1502.4,865.9 1504.4,865.6 1506.6,865.2 1508.8,864.9 1511.0,864.7 1513.2,864.5 1515.4,864.2 1517.5,863.9 1519.7,863.5 1521.9,863.0 1524.1,862.2 1526.2,861.7 1528.2,861.0 1530.3,860.3 1532.4,859.6 1534.4,858.7 1536.5,857.9 1538.6,857.0 1540.6,856.1 1542.7,855.2 1544.7,854.3 1546.8,853.4 1548.9,852.5 1550.9,851.7 1553.0,850.9 1555.1,850.1 1557.1,849.4 1559.2,848.7 1561.2,848.1 1563.3,847.4 1565.4,846.7 1567.4,846.1 1569.5,845.4 1571.6,844.8 1573.6,844.2 1575.7,843.7 1577.8,843.1 1579.8,842.6 1581.9,842.1 1583.9,841.6 1586.0,841.1 1588.1,840.7 1590.1,840.3 1592.2,839.9 1594.3,839.6 1596.3,839.2 1598.4,838.9 1600.5,838.6 1602.5,838.4 1604.6,838.1 1606.6,837.9 1608.7,837.7 1610.8,837.5 1612.8,837.3 1614.9,837.1 1617.0,836.9 1619.1,836.6 1621.2,836.5 1623.3,836.3 1625.4,836.3 1627.5,836.2 1629.6,836.2 1631.7,836.1 1633.8,836.1 1636.0,836.0 1638.1,835.9 1640.2,835.8 1642.3,835.7 1644.4,835.7 1646.5,835.6 1648.6,835.5 1650.7,835.5 1653.0,835.5 1655.2,835.5 1657.5,835.5 1659.7,835.5 1662.0,835.5 1664.2,835.5 1666.5,835.5" fill="none" stroke="#ff0000" stroke-width="2" />
<polyline points="2.8,759.5 5.0,759.5 7.2,759.6 9.4,759.6 11.6,759.7 13.8,759.7 15.9,759.7 18.1,759.7 20.3,759.6 22.5,759.5 24.8,759.2 27.0,758.8 29.3,758.2 31.5,757.7 33.8,757.3 35.8,757.2 37.9,757.0 40.0,756.9 42.0,756.8 44.1,756.6 46.1,756.5 48.2,756.4 50.3,756.3 52.3,756.2 54.4,756.1 56.5,756.0 58.5,755.9 60.6,755.9 62.7,755.9 64.7,755.9 66.8,755.9 68.8,756.0 70.9,756.1 73.0,756.2 75.0,756.4 77.1,756.6 79.2,756.7 81.2,756.9 83.3,757.1 85.3,757.3 87.4,757.5 89.5,757.6 91.5,757.7 93.6,757.8 95.7,757.8 97.7,757.9 99.8,757.8 101.9,757.8 103.9,757.7 106.0,757.7 108.0,757.6 110.1,757.5 112.2,757.3 114.2,757.2 116.3,757.1 118.4,757.0 120.4,756.9 122.5,756.8 124.6,756.8 126.6,756.7 128.7,756.7 130.8,756.6 132.9,756.5 135.1,756.5 137.2,756.4 139.3,756.3 141.4,756.3 143.5,756.2 145.6,756.2 147.7,756.2 149.8,756.2 151.9,756.2 154.1,756.3 156.2,756.4 158.3,756.5 160.4,756.7 162.4,757.0 164.5,757.3 166.6,757.7 168.6,758.1 170.7,758.5 172.8,759.0 174.8,759.5 176.9,760.0 179.0,760.5 181.0,761.0 183.1,761.6 185.1,762.1 187.2,762.7 189.3,763.2 191.3,763.8 193.4,764.2 195.6,764.7 197.7,765.2 199.8,765.8 201.9,766.3 204.0,766.8 206.1,767.3 208.2,767.9 210.3,768.4 212.4,769.0 214.5,769.5 216.7,770.0 218.8,770.6 220.9,771.1 223.0,771.7 225.1,772.2 227.2,772.8 229.2,773.4 231.3,774.0 233.4,774.7 235.4,775.4 237.5,776.1 239.5,776.7 241.6,777.4 243.7,778.0 245.7,778.6 247.8,779.1 249.9,779.6 251.9,780.0 254.0,780.4 256.0,780.6 258.2,780.8 260.3,780.9 262.4,781.0 264.5,781.0 266.6,780.9 268.7,780.8 270.8,780.7 272.9,780.5 275.0,780.3 277.2,780.1 279.3,779.9 281.4,779.7 283.5,779.5 285.6,779.3 287.7,779.1 289.8,778.9 291.9,778.8 293.9,778.6 296.0,778.4 298.1,778.3 300.1,778.1 302.2,777.9 304.3,777.7 306.3,777.5 308.4,777.3 310.4,777.0 312.5,776.8 314.6,776.5 316.6,776.2 318.7,775.9 320.8,775.6 322.9,775.2 325.0,774.8 327.1,774.4 329.2,774.0 331.3,773.5 333.4,773.1 335.5,772.6 337.6,772.1 339.8,771.6 341.9,771.1 344.0,770.6 346.1,770.2 348.2,769.7 350.3,769.3 352.4,768.9 354.5,768.5 356.6,768.2 358.7,767.8 360.7,767.5 362.8,767.1 364.8,766.8 366.9,766.5 369.0,766.2 371.0,765.9 373.1,765.7 375.2,765.4 377.2,765.2 379.3,764.9 381.4,764.7 383.4,764.5 385.5,764.3 387.5,764.1 389.6,764.0 391.7,763.9 393.7,763.7 395.8,763.6 397.9,763.5 399.9,763.5 402.0,763.4 404.1,763.3 406.1,763.3 408.2,763.2 410.2,763.1 412.3,763.1 414.4,763.0 416.4,762.9 418.5,762.8 420.7,762.7 422.8,762.6 424.9,762.5 427.0,762.3 429.1,762.2 431.2,762.1 433.3,761.9 435.4,761.8 437.5,761.7 439.6,761.6 441.8,761.6 443.9,761.5 446.0,761.5 448.1,761.5 450.2,761.5 452.3,761.6 454.5,761.7 456.6,762.0 458.7,762.2 460.8,762.5 463.0,762.8 465.1,763.1 467.2,763.4 469.4,763.7 471.5,763.9 473.6,764.1 475.7,764.2 477.9,764.3 480.0,764.3 482.0,764.2 484.1,764.1 486.1,763.9 488.2,763.6 490.2,763.3 492.3,762.9 494.3,762.4 496.4,761.9 498.4,761.4 500.5,760.8 502.5,760.1 504.6,759.5 506.6,758.9 508.7,758.2 510.8,757.4 512.8,756.6 514.9,755.7 517.0,754.8 519.0,753.9 521.1,753.1 523.1,752.2 525.2,751.4 527.3,750.7 529.3,750.0 531.4,749.4 533.5,748.8 535.6,748.1 537.8,747.6 540.0,747.2 542.2,746.9 544.4,746.7 546.6,746.5 548.8,746.4 551.0,746.2 553.2,746.0 555.2,745.9 557.2,745.8 559.3,745.7 561.3,745.6 563.4,745.5 565.4,745.5 567.5,745.4 569.5,745.4 571.6,745.3 573.6,745.3 575.7,745.2 577.7,745.1 579.8,745.0 581.9,744.9 583.9,744.8 586.0,744.7 588.0,744.6 590.1,744.5 592.2,744.4 594.2,744.3 596.3,744.2 598.4,744.1 600.4,744.0 602.5,743.9 604.6,743.8 606.6,743.8 608.7,743.7 610.8,743.7 612.9,743.6 615.1,743.6 617.2,743.6 619.3,743.5 621.4,743.5 623.5,743.5 625.6,743.5 627.7,743.5 629.8,743.5 631.9,743.5 634.1,743.6 636.2,743.6 638.3,743.7 640.4,743.8 642.6,744.0 644.8,744.3 646.9,744.7 649.1,745.1 651.3,745.5 653.5,746.0 655.7,746.3 657.9,746.6 660.1,746.9 662.1,747.1 664.1,747.4 666.1,747.6 668.1,747.8 670.1,747.7 672.1,747.5 674.1,746.9 676.3,746.1 678.5,745.1 680.7,744.0 682.9,742.6 685.1,741.3 687.3,739.9 689.5,738.5 691.7,737.3 693.8,736.2 696.0,735.5 698.1,734.8 700.2,734.2 702.3,733.7 704.4,733.1 706.5,732.6 708.6,732.1 710.7,731.6 712.8,731.0 714.9,730.4 717.1,729.8 719.2,729.1 721.2,728.5 723.2,727.9 725.2,727.2 727.2,726.5 729.2,725.8 731.2,725.0 733.2,724.3 735.2,723.6 737.3,722.8 739.3,722.1 741.3,721.4 743.3,720.7 745.3,720.0 747.3,719.3 749.4,718.5 751.4,717.6 753.4,716.8 755.5,715.9 757.5,715.1 759.6,714.3 761.6,713.5 763.7,712.8 765.7,712.1 767.8,711.4 769.8,710.9 771.9,710.5 773.9,710.1 776.0,709.8 778.1,709.6 780.1,709.3 782.2,709.1 784.3,708.9 786.3,708.7 788.4,708.5 790.4,708.4 792.5,708.2 794.6,708.0 796.6,707.9 798.7,707.7 800.8,707.5 802.9,707.3 805.0,707.1 807.1,707.0 809.2,706.8 811.3,706.7 813.4,706.5 815.5,706.4 817.6,706.3 819.8,706.1 821.9,706.0 824.0,705.8 826.1,705.6 828.2,705.4 830.3,705.2 832.4,704.9 834.5,704.7 836.6,704.3 838.7,704.0 840.7,703.7 842.8,703.3 844.8,702.9 846.9,702.5 849.0,702.1 851.0,701.7 853.1,701.2 855.2,700.8 857.2,700.3 859.3,699.8 861.4,699.3 863.4,698.7 865.5,698.2 867.7,697.2 869.9,695.9 872.0,694.6 874.2,693.3 876.4,691.9 878.6,690.6 880.8,689.5 883.0,688.5 885.2,687.8 887.4,687.3 889.7,687.5 891.9,688.1 894.2,688.3 896.4,687.8 898.5,687.0 900.5,685.9 902.5,684.6 904.6,683.2 906.6,681.7 908.6,680.3 910.7,679.0 912.7,677.9 914.7,677.1 916.9,676.5 919.1,676.1 921.4,676.0 923.6,676.1 925.8,676.4 928.0,676.7 930.2,677.1 932.3,677.3 934.5,677.7 936.6,678.0 938.7,678.5 940.8,679.0 943.0,679.5 945.1,680.0 947.2,680.5 949.4,681.0 951.5,681.5 953.6,681.9 955.7,682.2 957.9,682.5 960.0,682.7 962.1,682.8 964.2,682.9 966.3,682.9 968.4,682.9 970.6,682.8 972.7,682.8 974.8,682.7 976.9,682.5 979.0,682.4 981.1,682.2 983.2,682.1 985.3,681.9 987.4,681.8 989.5,681.6 991.7,681.4 993.8,681.3 995.8,681.2 997.9,681.0 1000.0,680.9 1002.0,680.7 1004.1,680.6 1006.1,680.4 1008.2,680.3 1010.3,680.1 1012.3,679.9 1014.4,679.7 1016.5,679.5 1018.5,679.3 1020.6,679.0 1022.7,678.8 1024.7,678.5 1026.8,678.2 1028.8,677.9 1030.9,677.5 1033.0,677.1 1035.0,676.7 1037.1,676.3 1039.2,675.9 1041.2,675.5 1043.3,675.1 1045.3,674.6 1047.4,674.2 1049.5,673.9 1051.5,673.5 1053.6,673.2 1055.7,672.9 1057.9,672.4 1060.0,672.0 1062.2,671.6 1064.4,671.2 1066.6,670.9 1068.8,670.6 1071.0,670.3 1073.2,670.2 1075.4,670.1 1077.6,670.0 1079.7,670.0 1081.9,670.1 1084.1,670.3 1086.3,670.4 1088.5,670.7 1090.7,670.9 1092.9,671.2 1095.1,671.5 1097.2,671.7 1099.3,672.0 1101.4,672.2 1103.5,672.6 1105.6,672.9 1107.7,673.2 1109.8,673.6 1111.9,673.9 1114.1,674.2 1116.2,674.5 1118.3,674.8 1120.4,675.1 1122.5,675.3 1124.6,675.5 1126.7,675.6 1128.8,675.8 1130.9,676.0 1133.0,676.1 1135.2,676.2 1137.3,676.4 1139.4,676.5 1141.5,676.7 1143.6,676.8 1145.7,677.0 1147.8,677.1 1149.9,677.3 1152.0,677.5 1154.1,677.7 1156.2,677.9 1158.3,678.1 1160.3,678.3 1162.4,678.6 1164.5,678.8 1166.5,679.1 1168.6,679.3 1170.7,679.6 1172.7,679.9 1174.8,680.1 1176.8,680.4 1178.9,680.6 1181.0,680.9 1183.0,681.1 1185.1,681.3 1187.2,681.5 1189.2,681.7 1191.3,681.8 1193.4,681.9 1195.4,682.0 1197.5,682.2 1199.5,682.3 1201.6,682.4 1203.7,682.5 1205.7,682.7 1207.8,682.9 1209.9,683.1 1211.9,683.4 1214.0,683.7 1216.0,684.1 1218.2,684.5 1220.3,684.9 1222.4,685.4 1224.5,685.9 1226.6,686.4 1228.7,686.9 1230.8,687.4 1232.9,688.0 1235.0,688.6 1237.2,689.2 1239.3,689.9 1241.4,690.7 1243.5,691.4 1245.6,692.2 1247.7,693.1 1249.8,694.0 1251.9,695.0 1253.9,696.1 1256.0,697.3 1258.1,698.5 1260.1,699.8 1262.2,701.1 1264.3,702.4 1266.3,703.8 1268.4,705.2 1270.4,706.6 1272.5,708.1 1274.6,709.5 1276.6,710.9 1278.7,712.3 1280.8,713.7 1282.9,715.4 1285.0,717.2 1287.1,719.1 1289.2,721.0 1291.3,722.9 1293.4,724.7 1295.5,726.6 1297.6,728.4 1299.8,730.2 1301.9,731.8 1304.0,733.4 1306.1,734.8 1308.3,736.5 1310.5,738.1 1312.7,739.5 1314.8,740.8 1317.0,742.0 1319.2,743.2 1321.4,744.2 1323.6,745.1 1325.8,746.0 1328.0,746.8 1330.2,747.5 1332.4,748.1 1334.5,748.6 1336.7,749.0 1338.9,749.4 1341.1,749.7 1343.3,750.0 1345.5,750.2 1347.7,750.4 1349.9,750.6 1352.0,750.7 1354.2,750.7 1356.4,750.7 1358.6,750.6 1360.8,750.5 1363.0,750.4 1365.2,750.2 1367.2,750.1 1369.3,750.0 1371.4,749.8 1373.4,749.7 1375.5,749.5 1377.6,749.3 1379.6,749.0 1381.7,748.8 1383.7,748.6 1385.8,748.4 1387.9,748.2 1389.9,747.9 1392.0,747.8 1394.1,747.6 1396.1,747.4 1398.2,747.2 1400.3,747.1 1402.5,746.8 1404.6,746.7 1406.7,746.5 1408.8,746.3 1410.9,746.1 1413.0,746.0 1415.1,745.9 1417.2,745.9 1419.3,745.9 1421.5,746.0 1423.5,746.3 1425.6,746.6 1427.6,747.1 1429.7,747.6 1431.8,748.2 1433.8,748.8 1435.9,749.3 1438.0,749.8 1440.0,750.2 1442.5,752.5 1444.6,753.0 1446.7,753.7 1448.8,754.4 1451.0,755.1 1453.1,755.9 1455.2,756.6 1457.3,757.3 1459.4,757.8 1461.5,758.4 1463.6,758.9 1465.7,759.5 1467.8,760.0 1469.9,760.4 1472.1,760.7 1474.2,760.9 1476.3,760.9 1478.3,760.9 1480.3,760.8 1482.3,760.6 1484.3,760.4 1486.3,760.2 1488.3,759.9 1490.3,759.6 1492.4,759.3 1494.4,759.0 1496.4,758.6 1498.4,758.3 1500.4,757.9 1502.4,757.6 1504.4,757.3 1506.6,756.8 1508.8,756.2 1511.0,755.6 1513.2,755.0 1515.4,754.4 1517.5,753.8 1519.7,753.3 1521.9,752.7 1524.1,752.2 1526.2,751.9 1528.2,751.6 1530.3,751.4 1532.4,751.1 1534.4,750.8 1536.5,750.6 1538.6,750.3 1540.6,750.1 1542.7,749.8 1544.7,749.6 1546.8,749.4 1548.9,749.2 1550.9,749.1 1553.0,748.9 1555.1,748.8 1557.1,748.8 1559.2,748.7 1561.2,748.7 1563.3,748.7 1565.4,748.7 1567.4,748.7 1569.5,748.8 1571.6,748.9 1573.6,748.9 1575.7,749.0 1577.8,749.1 1579.8,749.2 1581.9,749.3 1583.9,749.3 1586.0,749.4 1588.1,749.5 1590.1,749.6 1592.2,749.7 1594.3,749.8 1596.3,749.9 1598.4,750.0 1600.5,750.1 1602.5,750.2 1604.6,750.3 1606.6,750.4 1608.7,750.5 1610.8,750.6 1612.8,750.7 1614.9,750.8 1617.0,750.8 1619.1,750.9 1621.2,750.9 1623.3,751.0 1625.4,751.0 1627.5,751.0 1629.6,750.9 1631.7,750.9 1633.8,750.8 1636.0,750.7 1638.1,750.6 1640.2,750.4 1642.3,750.2 1644.4,750.1 1646.5,749.9 1648.6,749.8 1650.7,749.7 1653.0,749.6 1655.2,749.6 1657.5,749.6 1659.7,749.6 1662.0,749.6 1664.2,749.7 1666.5,749.7" fill="none" stroke="#00ff00" stroke-width="2" />
<polyline points="2.8,736.2 4.8,735.8 6.8,735.2 8.8,734.4 10.9,733.7 12.9,733.0 14.9,732.4 16.9,732.0 19.0,731.9 21.0,731.8 23.1,731.7 25.2,731.7 27.3,731.6 29.4,731.6 31.4,731.6 33.5,731.5 35.6,731.5 37.7,731.5 39.8,731.5 41.8,731.5 43.9,731.5 46.0,731.6 48.1,731.6 50.2,731.6 52.2,731.6 54.3,731.7 56.4,731.7 58.5,731.8 60.6,731.8 62.6,731.9 64.7,732.0 66.8,732.1 68.8,732.2 70.9,732.4 73.0,732.5 75.0,732.7 77.1,732.9 79.2,733.1 81.2,733.3 83.3,733.6 85.3,733.8 87.4,734.0 89.5,734.2 91.5,734.4 93.6,734.6 95.7,734.8 97.7,734.9 99.8,735.1 101.9,735.3 103.9,735.4 106.0,735.6 108.0,735.7 110.1,735.9 112.2,736.0 114.2,736.2 116.3,736.3 118.4,736.4 120.4,736.5 122.5,736.6 124.6,736.7 126.6,736.7 128.7,736.8 130.8,736.8 132.9,736.8 135.1,736.8 137.2,736.8 139.3,736.8 141.4,736.8 143.5,736.7 145.6,736.7 147.7,736.6 149.8,736.6 151.9,736.5 154.1,736.4 156.2,736.3 158.3,736.3 160.4,736.2 162.4,736.1 164.5,735.9 166.6,735.8 168.6,735.6 170.7,735.4 172.8,735.2 174.8,735.1 176.9,734.9 179.0,734.7 181.0,734.5 183.1,734.3 185.1,734.2 187.2,734.1 189.3,734.0 191.3,733.9 193.4,733.9 195.6,733.9 197.7,733.9 199.8,733.9 201.9,733.9 204.0,734.0 206.1,734.0 208.2,734.1 210.3,734.1 212.4,734.2 214.5,734.3 216.7,734.4 218.8,734.5 220.9,734.6 223.0,734.7 225.1,734.8 227.2,734.9 229.2,735.0 231.3,735.2 233.4,735.3 235.4,735.5 237.5,735.7 239.5,735.9 241.6,736.0 243.7,736.2 245.7,736.4 247.8,736.5 249.9,736.7 251.9,736.8 254.0,736.9 256.0,737.0 258.2,737.1 260.4,737.2 262.6,737.3 264.8,737.3 267.0,737.3 269.2,737.3 271.4,737.3 273.6,737.2 275.7,737.0 277.8,736.7 279.8,736.1 281.8,735.5 283.8,734.8 285.8,734.3 287.8,734.1 289.8,734.2 291.9,734.4 293.9,734.7 296.0,735.1 298.1,735.6 300.1,736.1 302.2,736.7 304.3,737.3 306.3,737.9 308.4,738.5 310.4,739.2 312.5,739.8 314.6,740.4 316.6,740.9 318.7,741.4 320.8,741.8 322.9,742.2 325.0,742.5 327.1,742.8 329.2,743.1 331.3,743.4 333.4,743.7 335.5,744.0 337.6,744.2 339.8,744.4 341.9,744.7 344.0,744.8 346.1,745.0 348.2,745.2 350.3,745.3 352.4,745.4 354.5,745.5 356.6,745.5 358.7,745.5 360.7,745.4 362.8,745.3 364.8,745.1 366.9,745.0 369.0,744.8 371.0,744.6 373.1,744.4 375.2,744.2 377.2,744.1 379.3,743.9 381.4,743.8 383.4,743.8 385.5,743.8 387.5,743.8 389.6,743.8 391.7,743.8 393.7,743.9 395.8,743.9 397.9,744.0 399.9,744.0 402.0,744.1 404.1,744.3 406.1,744.5 408.2,744.7 410.2,744.9 412.3,745.2 414.4,745.6 416.4,746.0 418.5,746.5 420.7,747.0 422.8,747.6 424.9,748.2 427.0,748.8 429.1,749.5 431.2,750.2 433.3,751.0 435.4,751.8 437.5,752.6 439.6,753.4 441.8,754.2 443.9,755.0 446.0,755.7 448.1,756.5 450.2,757.3 452.3,758.1 454.5,759.0 456.6,760.0 458.7,760.9 460.8,761.8 463.0,762.8 465.1,763.7 467.2,764.6 469.4,765.6 471.5,766.5 473.6,767.4 475.7,768.3 477.9,769.1 480.0,769.9 482.1,770.6 484.2,771.3 486.3,771.9 488.4,772.5 490.6,773.1 492.7,773.7 494.8,774.3 496.9,774.9 499.0,775.4 501.1,776.0 503.2,776.6 505.3,777.2 507.4,777.8 509.5,778.4 511.7,779.1 513.8,779.8 515.8,780.6 517.9,781.3 520.0,782.2 522.0,783.0 524.1,783.9 526.1,784.7 528.2,785.6 530.3,786.5 532.3,787.4 534.4,788.2 536.5,789.1 538.5,790.0 540.6,790.8 542.7,791.6 544.7,792.5 546.8,793.2 548.8,794.0 550.9,794.8 553.0,795.6 555.0,796.3 557.1,797.1 559.2,797.8 561.2,798.5 563.3,799.3 565.3,800.0 567.4,800.7 569.5,801.5 571.5,802.2 573.6,803.0 575.7,803.7 577.7,804.4 579.8,805.1 581.9,805.8 583.9,806.5 586.0,807.2 588.0,807.8 590.1,808.5 592.2,809.2 594.2,809.9 596.3,810.6 598.4,811.4 600.4,812.2 602.5,813.1 604.6,814.0 606.6,815.0 608.7,815.9 610.7,816.9 612.7,818.0 614.7,819.2 616.8,820.4 618.8,821.7 620.8,823.0 622.9,824.3 624.9,825.6 626.9,826.9 629.0,828.1 631.0,829.3 633.0,830.4 635.1,831.4 637.1,832.2 639.1,833.0 641.2,833.6 643.2,834.1 645.2,834.5 647.2,834.1 649.2,833.1 651.2,831.8 653.2,830.4 655.3,829.2 657.3,828.5 659.5,828.3 661.6,828.2 663.8,828.3 666.0,828.5 668.2,828.7 670.4,828.8 672.6,828.9 674.8,828.8 677.0,828.5 679.0,828.1 681.0,827.7 683.0,827.3 685.0,826.7 687.0,826.1 689.0,825.5 691.0,824.9 693.0,824.2 695.0,823.6 697.1,822.9 699.1,822.3 701.1,821.7 703.1,821.1 705.1,820.6 707.2,820.1 709.2,819.7 711.3,819.3 713.4,818.9 715.4,818.4 717.5,818.0 719.5,817.6 721.6,817.3 723.7,816.9 725.7,816.5 727.8,816.2 729.9,815.9 731.9,815.6 734.0,815.2 736.0,815.0 738.2,814.7 740.3,814.5 742.4,814.3 744.5,814.1 746.6,813.9 748.7,813.7 750.8,813.5 752.9,813.4 755.0,813.2 757.2,813.1 759.3,812.9 761.4,812.8 763.5,812.6 765.6,812.5 767.7,812.3 769.8,812.1 771.9,812.0 773.9,811.8 776.0,811.6 778.1,811.4 780.1,811.2 782.2,811.0 784.3,810.8 786.3,810.6 788.4,810.4 790.4,810.2 792.5,810.0 794.6,809.8 796.6,809.6 798.7,809.5 800.8,809.3 802.9,809.2 805.0,809.1 807.1,809.0 809.2,808.9 811.3,808.8 813.4,808.7 815.5,808.7 817.6,808.6 819.8,808.5 821.9,808.4 824.0,808.4 826.1,808.3 828.2,808.2 830.3,808.1 832.4,808.0 834.5,807.9 836.6,807.8 838.7,807.7 840.7,807.5 842.8,807.4 844.8,807.2 846.9,807.1 849.0,806.9 851.0,806.8 853.1,806.6 855.2,806.5 857.2,806.4 859.3,806.2 861.4,806.1 863.4,806.0 865.5,806.0 867.5,805.9 869.6,805.8 871.7,805.7 873.7,805.6 875.8,805.6 877.9,805.5 879.9,805.4 882.0,805.4 884.1,805.4 886.1,805.4 888.2,805.4 890.2,805.5 892.3,805.6 894.4,805.8 896.4,806.0 898.5,806.2 900.7,806.5 902.8,806.9 904.9,807.4 907.0,807.9 909.1,808.4 911.2,808.9 913.3,809.5 915.4,810.0 917.5,810.5 919.6,811.0 921.8,811.5 923.9,811.9 926.0,812.2 928.1,812.5 930.2,812.7 932.3,812.8 934.5,812.8 936.6,812.8 938.7,812.6 940.8,812.4 943.0,812.2 945.1,811.9 947.2,811.6 949.4,811.3 951.5,811.1 953.6,810.9 955.7,810.8 957.9,810.7 960.0,810.7 962.0,810.8 964.0,811.0 966.0,811.1 968.0,811.3 970.0,811.6 972.1,811.9 974.1,812.1 976.1,812.5 978.1,812.8 980.1,813.2 982.1,813.6 984.1,814.0 986.1,814.5 988.1,815.0 990.2,815.6 992.2,816.4 994.3,817.3 996.3,818.2 998.4,819.2 1000.4,820.2 1002.5,821.2 1004.5,822.1 1006.6,822.9 1008.6,823.6 1010.6,824.2 1012.7,824.7 1014.7,825.2 1016.8,825.5 1018.8,825.8 1020.9,826.0 1022.9,826.2 1025.0,826.3 1027.0,826.5 1029.1,826.6 1031.1,826.7 1033.2,826.8 1035.3,826.9 1037.4,827.0 1039.5,827.2 1041.6,827.3 1043.7,827.4 1045.8,827.5 1047.9,827.5 1050.0,827.5 1052.1,827.5 1054.3,827.3 1056.4,827.1 1058.5,826.8 1060.5,826.4 1062.5,826.0 1064.5,825.5 1066.5,825.0 1068.5,824.4 1070.5,823.8 1072.5,823.2 1074.6,822.5 1076.6,821.7 1078.6,821.0 1080.6,820.2 1082.6,819.4 1084.6,818.6 1086.6,817.8 1088.7,816.7 1090.7,815.4 1092.8,814.1 1094.8,812.7 1096.8,811.3 1098.9,809.9 1100.9,808.5 1103.0,807.2 1105.0,805.9 1107.1,804.7 1109.1,803.7 1111.1,802.3 1113.1,801.2 1115.2,800.2 1117.2,799.3 1119.2,798.4 1121.2,797.6 1123.2,796.7 1125.3,796.2 1127.3,795.8 1129.4,795.3 1131.5,794.8 1133.5,794.4 1135.6,793.9 1137.6,793.5 1139.7,793.0 1141.8,792.6 1143.8,792.2 1145.9,791.8 1148.0,791.3 1150.0,790.9 1152.1,790.6 1154.1,790.2 1156.2,789.9 1158.3,789.6 1160.3,789.3 1162.4,789.0 1164.5,788.8 1166.5,788.5 1168.6,788.3 1170.7,788.0 1172.7,787.8 1174.8,787.6 1176.8,787.3 1178.9,787.0 1181.0,786.7 1183.0,786.4 1185.1,786.0 1187.1,785.4 1189.2,784.8 1191.2,784.1 1193.3,783.3 1195.3,782.6 1197.4,781.8 1199.4,781.0 1201.5,780.3 1203.5,779.6 1205.6,779.0 1207.6,778.4 1209.6,778.0 1211.6,777.6 1213.6,777.2 1215.6,776.9 1217.7,776.6 1219.7,776.3 1221.7,776.0 1223.7,775.7 1225.7,775.4 1227.7,775.2 1229.7,774.9 1231.7,774.7 1233.7,774.4 1235.7,774.2 1237.8,773.9 1239.8,773.7 1241.8,773.5 1243.8,773.3 1245.8,773.1 1247.8,772.9 1249.8,772.8 1251.8,772.6 1253.8,772.4 1255.8,772.2 1257.9,772.0 1259.9,771.8 1261.9,771.6 1263.9,771.3 1265.9,771.1 1267.9,770.8 1269.9,770.5 1271.9,770.2 1273.9,769.9 1275.9,769.6 1278.0,769.3 1280.0,769.0 1282.0,768.7 1284.0,768.3 1286.0,768.0 1288.0,767.7 1290.0,767.4 1292.0,767.1 1294.1,766.8 1296.2,766.4 1298.4,766.1 1300.5,765.7 1302.6,765.3 1304.7,764.9 1306.8,764.6 1308.9,764.3 1311.0,764.0 1313.1,763.8 1315.2,763.6 1317.3,763.5 1319.4,763.4 1321.4,763.3 1323.4,763.3 1325.4,763.3 1327.4,763.3 1329.4,763.4 1331.4,763.5 1333.4,763.6 1335.4,763.7 1337.4,763.9 1339.5,764.1 1341.5,764.3 1343.5,764.6 1345.5,764.9 1347.7,765.4 1349.9,766.1 1352.0,766.8 1354.2,767.6 1356.4,768.5 1358.6,769.4 1360.8,770.5 1363.0,771.6 1365.2,772.8 1367.4,774.0 1369.6,775.3 1371.7,776.7 1373.9,778.1 1376.1,779.7 1378.3,781.3 1380.5,783.0 1382.7,784.9 1384.9,786.8 1386.9,788.6 1389.0,790.5 1391.0,792.5 1393.1,794.6 1395.1,796.7 1397.2,798.9 1399.2,801.1 1401.2,803.3 1403.3,805.4 1405.3,807.4 1407.4,809.3 1409.6,811.6 1411.8,813.8 1413.9,816.1 1416.1,818.2 1418.3,820.3 1420.5,822.3 1422.7,824.2 1424.9,826.0 1427.1,827.6 1429.2,829.8 1431.4,831.8 1433.6,833.5 1435.7,835.1 1437.9,836.4 1440.0,837.5 1442.5,839.7 1444.6,840.1 1446.7,840.5 1448.8,841.0 1451.0,841.5 1453.1,841.9 1455.2,842.4 1457.3,842.8 1459.4,843.1 1461.5,843.4 1463.6,843.6 1465.7,843.8 1467.8,844.0 1469.9,844.2 1472.1,844.3 1474.2,844.4 1476.3,844.5 1478.3,844.6 1480.3,844.6 1482.3,844.7 1484.3,844.7 1486.3,844.8 1488.3,844.8 1490.3,844.8 1492.4,844.8 1494.4,844.8 1496.4,844.8 1498.4,844.8 1500.4,844.7 1502.4,844.6 1504.4,844.5 1506.6,844.3 1508.8,844.0 1511.0,843.8 1513.2,843.4 1515.4,843.0 1517.5,842.6 1519.7,842.1 1521.9,841.5 1524.1,840.8 1526.2,840.4 1528.2,839.9 1530.3,839.3 1532.4,838.8 1534.4,838.1 1536.5,837.5 1538.6,836.8 1540.6,836.2 1542.7,835.5 1544.7,834.8 1546.8,834.2 1548.9,833.5 1550.9,832.9 1553.0,832.4 1555.1,831.8 1557.1,831.3 1559.2,830.9 1561.2,830.4 1563.3,830.0 1565.4,829.5 1567.4,829.1 1569.5,828.7 1571.6,828.3 1573.6,827.9 1575.7,827.5 1577.8,827.2 1579.8,826.8 1581.9,826.4 1583.9,826.0 1586.0,825.7 1588.1,825.3 1590.1,824.9 1592.2,824.5 1594.3,824.1 1596.3,823.8 1598.4,823.4 1600.5,823.1 1602.5,822.7 1604.6,822.4 1606.6,822.0 1608.7,821.7 1610.8,821.4 1612.8,821.1 1614.9,820.8 1617.0,820.6 1619.1,820.2 1621.2,819.9 1623.3,819.6 1625.4,819.4 1627.5,819.2 1629.6,819.0 1631.7,818.7 1633.8,818.3 1636.0,817.9 1638.1,817.3 1640.2,816.7 1642.3,816.0 1644.4,815.4 1646.5,814.7 1648.6,814.1 1650.7,813.6 1653.0,812.9 1655.2,812.3 1657.5,811.7 1659.7,811.1 1662.0,810.6 1664.2,810.2 1666.5,809.9" fill="none" stroke="#ff00ff" stroke-width="2" />
<polyline points="2.8,750.8 4.9,750.8 6.9,750.9 9.0,751.0 11.1,751.1 13.1,751.2 15.2,751.3 17.3,751.4 19.3,751.5 21.4,751.6 23.4,751.6 25.5,751.5 27.6,751.3 29.6,751.1 31.7,750.7 33.8,750.2 35.8,749.6 37.9,748.9 40.0,748.1 42.0,747.2 44.1,746.1 46.1,745.1 48.2,743.9 50.3,742.8 52.3,741.6 54.4,740.4 56.5,739.2 58.5,738.0 60.6,736.9 62.7,735.8 64.7,734.8 66.8,733.8 68.8,732.8 70.9,731.8 73.0,730.8 75.0,729.9 77.1,728.9 79.2,727.9 81.2,727.0 83.3,726.1 85.3,725.1 87.4,724.2 89.5,723.3 91.5,722.4 93.6,721.6 95.7,720.7 97.7,719.9 99.8,719.0 101.9,718.2 103.9,717.4 106.0,716.6 108.0,715.8 110.1,715.0 112.2,714.3 114.2,713.5 116.3,712.8 118.4,712.1 120.4,711.4 122.5,710.7 124.6,710.1 126.6,709.4 128.7,708.9 130.8,708.3 132.9,707.8 135.1,707.3 137.2,706.8 139.3,706.4 141.4,705.9 143.5,705.5 145.6,705.0 147.7,704.6 149.8,704.2 151.9,703.7 154.1,703.3 156.2,702.8 158.3,702.3 160.4,701.8 162.4,701.3 164.5,700.8 166.6,700.3 168.6,699.7 170.7,699.2 172.8,698.6 174.8,698.1 176.9,697.5 179.0,697.0 181.0,696.4 183.1,695.8 185.1,695.3 187.2,694.7 189.3,694.0 191.3,693.4 193.4,692.8 195.6,692.1 197.7,691.3 199.8,690.6 201.9,689.8 204.0,689.0 206.1,688.2 208.2,687.4 210.3,686.6 212.4,685.8 214.5,685.1 216.7,684.5 218.8,683.9 220.9,683.4 223.0,683.0 225.1,682.7 227.2,682.5 229.2,682.4 231.3,682.4 233.4,682.5 235.4,682.7 237.5,682.9 239.5,683.2 241.6,683.5 243.7,683.8 245.7,684.2 247.8,684.5 249.9,684.8 251.9,685.1 254.0,685.3 256.0,685.5 258.2,685.7 260.3,685.8 262.4,686.0 264.5,686.1 266.6,686.3 268.7,686.4 270.8,686.6 272.9,686.7 275.0,686.8 277.2,686.9 279.3,687.1 281.4,687.2 283.5,687.3 285.6,687.4 287.7,687.4 289.8,687.5 291.9,687.6 293.9,687.6 296.0,687.6 298.1,687.6 300.1,687.6 302.2,687.6 304.3,687.6 306.3,687.6 308.4,687.6 310.4,687.6 312.5,687.6 314.6,687.5 316.6,687.5 318.7,687.5 320.8,687.5 322.9,687.5 325.0,687.5 327.1,687.5 329.2,687.6 331.3,687.6 333.4,687.6 335.5,687.7 337.6,687.7 339.8,687.7 341.9,687.7 344.0,687.7 346.1,687.7 348.2,687.7 350.3,687.7 352.4,687.6 354.5,687.5 356.6,687.4 358.7,687.2 360.7,687.0 362.8,686.8 364.8,686.6 366.9,686.3 369.0,686.0 371.0,685.8 373.1,685.5 375.2,685.2 377.2,685.0 379.3,684.7 381.4,684.5 383.4,684.3 385.5,684.1 387.5,684.0 389.6,683.9 391.7,683.9 393.7,683.9 395.8,683.9 397.9,683.9 399.9,683.9 402.0,683.9 404.1,683.9 406.1,683.8 408.2,683.7 410.2,683.6 412.3,683.4 414.4,683.1 416.4,682.7 418.5,682.3 420.7,681.8 422.8,681.2 424.9,680.6 427.0,679.9 429.1,679.2 431.2,678.5 433.3,677.7 435.4,677.0 437.5,676.2 439.6,675.4 441.8,674.5 443.9,673.7 446.0,673.0 448.1,672.2 450.2,671.5 452.3,670.6 454.5,669.7 456.6,668.7 458.7,667.6 460.8,666.6 463.0,665.6 465.1,664.5 467.2,663.6 469.4,662.7 471.5,661.8 473.6,661.1 475.7,660.5 477.9,660.0 480.0,659.6 482.1,659.5 484.2,659.4 486.3,659.5 488.4,659.6 490.6,659.8 492.7,660.1 494.8,660.4 496.9,660.8 499.0,661.2 501.1,661.6 503.2,662.1 505.3,662.6 507.4,663.1 509.5,663.5 511.7,664.0 513.8,664.4 515.8,664.9 517.9,665.3 520.0,665.8 522.0,666.3 524.1,666.8 526.1,667.3 528.2,667.9 530.3,668.4 532.3,669.0 534.4,669.6 536.5,670.2 538.5,670.9 540.6,671.5 542.7,672.2 544.7,672.9 546.8,673.6 548.8,674.3 550.9,675.0 553.0,675.8 555.0,676.6 557.1,677.4 559.2,678.2 561.2,679.0 563.3,679.9 565.3,680.7 567.4,681.6 569.5,682.6 571.5,683.5 573.6,684.5 575.7,685.5 577.7,686.4 579.7,687.4 581.8,688.5 583.8,689.6 585.8,690.7 587.9,691.9 589.9,693.1 591.9,694.3 594.0,695.5 596.0,696.6 598.0,697.8 600.1,698.9 602.1,699.9 604.1,700.9 606.1,701.8 608.2,702.6 610.2,703.2 612.2,703.8 614.3,704.4 616.3,704.9 618.3,705.3 620.3,705.6 622.3,705.8 624.3,705.9 626.3,705.9 628.3,705.9 630.3,705.7 632.3,705.5 634.4,705.2 636.4,704.8 638.4,704.3 640.4,703.8 642.5,703.2 644.6,702.4 646.7,701.5 648.8,700.3 650.9,699.1 653.0,697.9 655.2,696.5 657.3,695.2 659.4,693.9 661.5,692.7 663.6,691.5 665.7,690.5 667.8,689.6 669.9,689.0 672.0,688.5 674.1,688.3 676.2,688.4 678.3,688.8 680.3,689.3 682.4,690.0 684.5,690.9 686.5,691.9 688.6,693.0 690.7,694.2 692.7,695.5 694.8,696.7 696.8,698.0 698.9,699.2 701.0,700.4 703.0,701.5 705.1,702.4 707.2,703.3 709.2,704.2 711.3,705.1 713.4,706.1 715.4,707.0 717.5,707.9 719.5,708.8 721.6,709.7 723.7,710.6 725.7,711.4 727.8,712.2 729.9,713.0 731.9,713.7 734.0,714.4 736.0,715.1 738.2,715.6 740.3,716.1 742.4,716.6 744.5,717.0 746.6,717.4 748.7,717.8 750.8,718.1 752.9,718.5 755.0,718.8 757.2,719.0 759.3,719.3 761.4,719.6 763.5,719.9 765.6,720.1 767.7,720.4 769.8,720.7 771.9,721.0 773.9,721.4 776.0,721.7 778.1,722.0 780.1,722.4 782.2,722.7 784.3,723.0 786.3,723.3 788.4,723.6 790.4,723.9 792.5,724.1 794.6,724.2 796.6,724.3 798.7,724.4 800.8,724.4 802.9,724.3 805.0,724.1 807.1,723.9 809.2,723.6 811.3,723.3 813.4,722.9 815.5,722.5 817.6,722.1 819.8,721.7 821.9,721.2 824.0,720.8 826.1,720.4 828.2,720.1 830.3,719.8 832.4,719.5 834.5,719.3 836.5,718.9 838.5,718.6 840.6,718.5 842.6,718.4 844.6,718.4 846.6,718.5 848.6,718.7 850.7,719.1 852.8,719.5 854.9,720.0 857.0,720.6 859.2,721.3 861.3,722.0 863.4,722.8 865.5,723.5 867.5,723.9 869.6,724.3 871.7,724.8 873.7,725.2 875.8,725.7 877.9,726.1 879.9,726.6 882.0,727.1 884.1,727.6 886.1,728.1 888.2,728.6 890.2,729.1 892.3,729.6 894.4,730.1 896.4,730.5 898.5,731.5 900.7,732.6 902.8,733.8 904.9,734.9 907.0,736.0 909.1,737.0 911.2,737.8 913.3,738.4 915.4,738.8 917.5,739.0 919.6,739.0 921.8,738.9 923.9,738.8 926.0,738.7 928.1,738.8 930.2,739.0 932.3,739.2 934.5,739.5 936.6,739.9 938.7,740.3 940.8,740.7 943.0,741.1 945.1,741.6 947.2,742.0 949.4,742.5 951.5,742.8 953.6,743.2 955.7,743.5 957.9,743.7 960.0,743.8 962.1,743.8 964.2,743.8 966.3,743.7 968.4,743.5 970.6,743.4 972.7,743.2 974.8,742.9 976.9,742.7 979.0,742.4 981.1,742.1 983.2,741.9 985.3,741.6 987.4,741.4 989.5,741.2 991.7,741.1 993.8,741.0 995.8,740.9 997.9,740.8 1000.0,740.7 1002.0,740.6 1004.1,740.5 1006.1,740.4 1008.2,740.4 1010.3,740.4 1012.3,740.4 1014.4,740.4 1016.5,740.4 1018.5,740.5 1020.6,740.6 1022.7,740.8 1024.7,741.0 1026.9,741.4 1029.1,741.9 1031.3,742.6 1033.5,743.3 1035.7,744.1 1037.8,744.9 1040.0,745.7 1042.2,746.6 1044.4,747.4 1046.7,749.0 1048.9,750.8 1051.2,752.6 1053.4,754.3 1055.7,755.9 1057.7,756.4 1059.8,756.8 1061.9,757.3 1063.9,757.8 1066.0,758.3 1068.0,758.8 1070.1,759.3 1072.2,759.7 1074.2,760.1 1076.3,760.5 1078.4,760.8 1080.4,761.1 1082.5,761.3 1084.6,761.4 1086.6,761.5 1088.8,761.4 1091.0,761.1 1093.2,760.6 1095.4,760.0 1097.6,759.4 1099.7,758.7 1101.9,758.1 1104.1,757.6 1106.3,757.3 1108.3,757.2 1110.3,757.1 1112.3,757.0 1114.4,757.0 1116.4,757.0 1118.4,757.0 1120.4,757.1 1122.4,757.1 1124.4,757.2 1126.4,757.3 1128.4,757.4 1130.4,757.6 1132.4,757.7 1134.5,757.8 1136.5,758.1 1138.5,758.3 1140.6,758.6 1142.6,759.0 1144.7,759.3 1146.7,759.7 1148.8,760.1 1150.8,760.4 1152.9,760.8 1154.9,761.2 1157.0,761.5 1159.0,761.8 1161.0,762.0 1163.0,762.3 1165.0,762.6 1167.0,762.9 1169.0,763.2 1171.0,763.5 1173.0,763.7 1175.0,764.0 1177.1,764.2 1179.1,764.4 1181.1,764.6 1183.1,764.8 1185.1,764.9 1187.3,765.0 1189.5,765.1 1191.7,765.2 1193.9,765.2 1196.0,765.1 1198.2,765.0 1200.4,764.9 1202.6,764.6 1204.8,764.3 1206.9,764.1 1208.9,763.8 1211.0,763.5 1213.0,763.2 1215.1,762.9 1217.2,762.5 1219.2,762.1 1221.3,761.7 1223.4,761.3 1225.4,760.9 1227.5,760.4 1229.6,760.0 1231.6,759.5 1233.7,759.1 1235.7,758.7 1237.9,758.1 1240.0,757.6 1242.1,757.0 1244.2,756.4 1246.3,755.8 1248.4,755.2 1250.5,754.6 1252.6,753.9 1254.7,753.3 1256.8,752.8 1259.0,752.2 1261.1,751.7 1263.2,751.1 1265.3,750.6 1267.4,750.1 1269.5,749.6 1271.6,749.1 1273.7,748.7 1275.8,748.2 1278.0,747.7 1280.1,747.3 1282.2,746.9 1284.3,746.4 1286.4,746.0 1288.4,745.6 1290.5,745.2 1292.5,744.7 1294.6,744.3 1296.6,743.9 1298.7,743.5 1300.7,743.2 1302.8,742.8 1304.8,742.5 1306.9,742.1 1308.9,741.8 1311.1,741.4 1313.3,740.9 1315.5,740.4 1317.7,740.0 1319.8,739.6 1322.0,739.3 1324.2,739.0 1326.4,738.9 1328.6,739.0 1330.7,739.3 1332.8,739.7 1334.9,740.2 1337.0,740.9 1339.2,741.7 1341.3,742.6 1343.4,743.6 1345.5,744.6 1347.5,745.4 1349.6,746.2 1351.6,747.1 1353.7,748.1 1355.7,749.0 1357.8,750.1 1359.8,751.1 1361.9,752.2 1363.9,753.4 1365.9,754.6 1368.0,755.9 1370.0,756.9 1372.0,758.1 1374.0,759.3 1376.0,760.5 1378.0,761.9 1380.0,763.2 1382.1,764.5 1384.1,765.9 1386.1,767.2 1388.1,768.4 1390.1,769.6 1392.1,770.8 1394.1,771.8 1396.1,772.8 1398.2,773.7 1400.3,774.6 1402.5,775.5 1404.6,776.2 1406.7,776.9 1408.8,777.5 1410.9,778.1 1413.0,778.7 1415.1,779.2 1417.2,779.7 1419.3,780.2 1421.5,780.6 1423.5,781.2 1425.6,781.8 1427.6,782.2 1429.7,782.6 1431.8,783.0 1433.8,783.3 1435.9,783.6 1438.0,783.8 1440.0,784.0 1442.5,784.0 1444.6,784.0 1446.7,783.9 1448.8,783.9 1451.0,783.8 1453.1,783.8 1455.2,783.8 1457.3,783.9 1459.4,784.0 1461.5,784.2 1463.6,784.4 1465.7,784.7 1467.8,785.1 1469.9,785.4 1472.1,785.9 1474.2,786.3 1476.3,786.8 1478.3,787.1 1480.3,787.5 1482.3,787.9 1484.3,788.3 1486.3,788.8 1488.3,789.3 1490.3,789.7 1492.4,790.2 1494.4,790.6 1496.4,791.1 1498.4,791.5 1500.4,791.8 1502.4,792.2 1504.4,792.5 1506.6,792.8 1508.8,793.0 1511.0,793.1 1513.2,793.2 1515.4,793.3 1517.5,793.4 1519.7,793.5 1521.9,793.6 1524.1,793.9 1526.2,794.0 1528.2,794.3 1530.3,794.5 1532.4,794.8 1534.4,795.0 1536.5,795.3 1538.6,795.6 1540.6,795.9 1542.7,796.2 1544.7,796.5 1546.8,796.7 1548.9,797.0 1550.9,797.2 1553.0,797.4 1555.1,797.5 1557.1,797.6 1559.2,797.7 1561.2,797.9 1563.3,797.9 1565.4,798.0 1567.4,798.1 1569.5,798.1 1571.6,798.2 1573.6,798.2 1575.7,798.1 1577.8,798.1 1579.8,798.0 1581.9,797.9 1583.9,797.7 1586.0,797.5 1588.1,797.3 1590.1,796.9 1592.2,796.6 1594.3,796.1 1596.3,795.7 1598.4,795.2 1600.5,794.7 1602.5,794.1 1604.6,793.6 1606.6,793.1 1608.7,792.6 1610.8,792.2 1612.8,791.7 1614.9,791.4 1617.0,791.0 1619.1,790.6 1621.2,790.2 1623.3,790.0 1625.4,789.7 1627.5,789.6 1629.6,789.4 1631.7,789.3 1633.8,789.1 1636.0,788.9 1638.1,788.7 1640.2,788.6 1642.3,788.4 1644.4,788.3 1646.5,788.1 1648.6,787.9 1650.7,787.7 1653.0,787.3 1655.2,786.9 1657.5,786.4 1659.7,785.9 1662.0,785.5 1664.2,785.1 1666.5,784.9" fill="none" stroke="#00bfff" stroke-width="2" />
<polyline points="2.8,786.0 4.9,786.0 6.9,786.0 9.0,786.0 11.0,786.1 13.0,786.1 15.1,786.1 17.1,786.1 19.2,786.1 21.2,786.1 23.3,786.1 25.3,786.0 27.4,785.8 29.5,785.5 31.7,785.2 33.8,784.8 35.9,784.5 38.0,784.2 40.1,784.0 42.2,784.0 44.3,784.1 46.3,784.3 48.3,784.5 50.4,784.8 52.4,785.2 54.5,785.5 56.5,785.9 58.6,786.2 60.6,786.5 62.7,786.7 64.7,786.8 66.8,786.9 68.8,786.9 70.9,786.9 73.0,786.8 75.0,786.8 77.1,786.7 79.2,786.6 81.2,786.5 83.3,786.4 85.3,786.3 87.4,786.2 89.5,786.2 91.5,786.1 93.6,786.0 95.7,786.0 97.7,786.0 99.8,786.0 101.9,786.0 103.9,786.0 106.0,786.0 108.0,786.0 110.1,786.0 112.2,786.1 114.2,786.1 116.3,786.1 118.4,786.1 120.4,786.1 122.5,786.1 124.6,786.0 126.6,786.0 128.7,785.9 130.8,785.7 132.9,785.6 135.1,785.4 137.2,785.2 139.3,784.9 141.4,784.7 143.5,784.5 145.6,784.4 147.7,784.2 149.8,784.1 151.9,784.0 154.1,784.0 156.2,784.0 158.3,784.1 160.4,784.2 162.5,784.3 164.6,784.5 166.7,784.7 168.8,784.9 170.9,785.0 172.9,785.2 175.0,785.4 177.0,785.6 179.1,785.8 181.1,786.0 183.1,786.2 185.2,786.4 187.2,786.6 189.3,786.7 191.3,786.8 193.4,786.9 195.6,786.9 197.7,787.0 199.8,787.0 201.9,787.1 204.0,787.1 206.1,787.1 208.2,787.1 210.3,787.1 212.4,787.1 214.5,787.1 216.7,787.1 218.8,787.0 220.9,787.0 223.0,786.9 225.1,786.8 227.2,786.7 229.2,786.6 231.3,786.4 233.4,786.3 235.4,786.1 237.5,785.9 239.5,785.6 241.6,785.4 243.7,785.2 245.7,785.0 247.8,784.8 249.9,784.6 251.9,784.4 254.0,784.2 256.0,784.0 258.2,783.7 260.4,783.4 262.6,783.1 264.8,782.8 267.0,782.5 269.2,782.3 271.4,782.1 273.6,782.0 275.7,782.0 277.8,782.3 279.8,782.8 281.8,783.4 283.8,784.0 285.8,784.6 287.8,784.9 289.8,784.9 291.9,784.7 293.9,784.4 296.0,784.1 298.1,783.7 300.1,783.2 302.2,782.8 304.3,782.2 306.3,781.7 308.4,781.2 310.4,780.6 312.5,780.1 314.6,779.6 316.6,779.1 318.7,778.7 320.8,778.4 322.9,778.1 325.0,777.8 327.1,777.6 329.2,777.4 331.3,777.2 333.4,777.0 335.5,776.8 337.6,776.7 339.8,776.5 341.9,776.4 344.0,776.2 346.1,776.1 348.2,776.0 350.3,775.8 352.4,775.7 354.5,775.6 356.6,775.4 358.7,775.3 360.7,775.2 362.8,775.1 364.8,775.0 366.9,774.9 369.0,774.9 371.0,774.8 373.1,774.7 375.2,774.6 377.2,774.6 379.3,774.5 381.4,774.4 383.4,774.3 385.5,774.2 387.7,773.9 389.9,773.7 392.0,773.4 394.2,773.0 396.4,772.7 398.6,772.5 400.8,772.2 403.0,772.0 405.2,771.9 407.2,771.9 409.3,771.9 411.3,771.9 413.4,772.0 415.4,772.1 417.5,772.2 419.5,772.3 421.5,772.4 423.6,772.5 425.6,772.6 427.7,772.7 429.7,772.8 431.8,772.9 433.8,773.0 435.9,773.1 437.9,773.1 440.0,773.1 442.0,773.1 444.1,773.1 446.1,773.0 448.2,772.9 450.2,772.8 452.3,772.5 454.5,772.1 456.6,771.7 458.7,771.2 460.8,770.7 463.0,770.2 465.1,769.6 467.2,769.0 469.4,768.3 471.5,767.6 473.6,766.8 475.7,766.0 477.9,765.2 480.0,764.3 482.1,763.5 484.2,762.6 486.3,761.6 488.4,760.6 490.6,759.6 492.7,758.4 494.8,757.3 496.9,756.2 499.0,755.1 501.1,753.9 503.2,752.8 505.3,751.7 507.4,750.7 509.5,749.7 511.7,748.8 513.8,748.0 515.8,747.2 517.9,746.5 520.0,745.9 522.0,745.3 524.1,744.8 526.1,744.3 528.2,743.8 530.3,743.4 532.3,742.9 534.4,742.4 536.5,741.9 538.5,741.3 540.6,740.6 542.7,739.8 544.7,739.0 546.8,738.0 548.8,737.0 550.9,735.9 553.0,734.8 555.0,733.6 557.1,732.4 559.2,731.2 561.2,729.9 563.3,728.6 565.3,727.2 567.4,725.9 569.5,724.6 571.5,723.3 573.6,722.0 575.7,720.7 577.7,719.4 579.8,718.1 581.9,716.8 583.9,715.4 586.0,714.0 588.0,712.6 590.1,711.2 592.2,709.9 594.2,708.5 596.3,707.2 598.4,705.9 600.4,704.6 602.5,703.3 604.6,702.1 606.6,701.0 608.7,700.0 610.8,698.9 612.9,697.9 615.1,696.9 617.2,696.0 619.3,695.0 621.4,694.1 623.5,693.2 625.6,692.3 627.7,691.5 629.8,690.7 631.9,690.0 634.1,689.3 636.2,688.6 638.3,688.0 640.4,687.5 642.5,687.0 644.6,686.6 646.7,686.3 648.8,686.0 650.9,685.8 653.0,685.6 655.2,685.5 657.3,685.4 659.4,685.3 661.5,685.3 663.6,685.2 665.7,685.2 667.8,685.1 669.9,685.1 672.0,685.0 674.1,685.0 676.2,684.9 678.3,684.8 680.3,684.8 682.4,684.8 684.5,684.8 686.5,684.8 688.6,684.8 690.7,684.9 692.7,684.9 694.8,684.9 696.8,684.9 698.9,684.9 701.0,684.8 703.0,684.8 705.1,684.7 707.2,684.6 709.2,684.4 711.3,684.2 713.4,683.9 715.4,683.6 717.5,683.4 719.5,683.1 721.6,682.8 723.7,682.6 725.7,682.3 727.8,682.1 729.9,682.0 731.9,681.9 734.0,681.8 736.0,681.9 738.2,682.0 740.3,682.2 742.4,682.4 744.5,682.7 746.6,683.0 748.7,683.4 750.8,683.8 752.9,684.2 755.0,684.6 757.2,685.0 759.3,685.4 761.4,685.8 763.5,686.1 765.6,686.5 767.7,686.7 769.8,686.9 771.9,687.1 773.9,687.2 776.0,687.3 778.1,687.3 780.1,687.3 782.2,687.3 784.3,687.3 786.3,687.3 788.4,687.3 790.4,687.3 792.5,687.3 794.6,687.3 796.6,687.4 798.7,687.6 800.8,687.8 802.9,688.0 805.0,688.3 807.1,688.5 809.2,688.8 811.3,689.1 813.4,689.4 815.5,689.8 817.6,690.1 819.8,690.5 821.9,690.9 824.0,691.4 826.1,691.8 828.2,692.3 830.3,692.9 832.4,693.4 834.5,694.0 836.6,694.6 838.7,695.4 840.7,696.1 842.8,697.0 844.8,697.8 846.9,698.7 849.0,699.6 851.0,700.5 853.1,701.5 855.2,702.4 857.2,703.3 859.3,704.2 861.4,705.0 863.4,705.9 865.5,706.6 867.7,707.9 869.9,709.2 872.0,710.5 874.2,711.7 876.4,712.9 878.6,714.0 880.8,715.0 883.0,715.8 885.2,716.5 887.2,716.8 889.2,717.1 891.2,717.3 893.2,717.4 895.2,717.5 897.2,717.5 899.2,717.5 901.3,717.5 903.3,717.4 905.3,717.3 907.3,717.1 909.3,716.9 911.3,716.7 913.3,716.5 915.4,716.0 917.5,715.3 919.6,714.5 921.8,713.6 923.9,712.6 926.0,711.6 928.1,710.5 930.2,709.4 932.3,708.8 934.5,708.1 936.6,707.5 938.7,706.7 940.8,706.0 943.0,705.3 945.1,704.5 947.2,703.7 949.4,703.0 951.5,702.2 953.6,701.4 955.7,700.6 957.9,699.8 960.0,699.0 962.1,698.3 964.2,697.6 966.3,696.9 968.4,696.2 970.6,695.4 972.7,694.7 974.8,693.9 976.9,693.2 979.0,692.4 981.1,691.7 983.2,691.0 985.3,690.3 987.4,689.6 989.5,689.0 991.7,688.4 993.8,687.8 995.8,687.2 997.9,686.7 1000.0,686.2 1002.0,685.7 1004.1,685.2 1006.1,684.8 1008.2,684.4 1010.3,684.0 1012.3,683.6 1014.4,683.2 1016.5,682.8 1018.5,682.5 1020.6,682.1 1022.7,681.7 1024.7,681.3 1026.8,680.9 1028.8,680.5 1030.9,680.1 1033.0,679.7 1035.0,679.3 1037.1,678.9 1039.2,678.5 1041.2,678.1 1043.3,677.7 1045.3,677.3 1047.4,677.0 1049.5,676.6 1051.5,676.3 1053.6,676.0 1055.7,675.7 1057.9,675.2 1060.0,674.8 1062.2,674.4 1064.4,674.0 1066.6,673.7 1068.8,673.4 1071.0,673.2 1073.2,673.0 1075.4,672.9 1077.6,672.8 1079.7,672.8 1081.9,672.9 1084.1,673.0 1086.3,673.2 1088.5,673.3 1090.7,673.5 1092.9,673.6 1095.1,673.7 1097.2,673.8 1099.3,673.8 1101.4,673.8 1103.5,673.9 1105.6,673.9 1107.7,673.9 1109.8,674.0 1111.9,674.0 1114.1,674.0 1116.2,674.1 1118.3,674.2 1120.4,674.3 1122.5,674.4 1124.6,674.5 1126.7,674.6 1128.8,674.7 1130.9,674.9 1133.0,675.0 1135.2,675.2 1137.3,675.4 1139.4,675.5 1141.5,675.7 1143.6,675.8 1145.7,675.9 1147.8,676.0 1149.9,676.1 1152.0,676.2 1154.1,676.2 1156.2,676.2 1158.3,676.2 1160.3,676.1 1162.4,676.0 1164.5,675.9 1166.5,675.7 1168.6,675.6 1170.7,675.4 1172.7,675.3 1174.8,675.2 1176.8,675.1 1178.9,675.0 1181.0,675.0 1183.0,675.0 1185.1,675.1 1187.2,675.2 1189.2,675.4 1191.3,675.6 1193.4,675.8 1195.4,676.0 1197.5,676.2 1199.5,676.5 1201.6,676.8 1203.7,677.1 1205.7,677.5 1207.8,677.9 1209.9,678.3 1211.9,678.8 1214.0,679.3 1216.0,679.9 1218.2,680.5 1220.3,681.2 1222.4,681.9 1224.5,682.7 1226.6,683.5 1228.7,684.4 1230.8,685.3 1232.9,686.2 1235.0,687.1 1237.2,688.0 1239.3,688.9 1241.4,689.7 1243.5,690.5 1245.6,691.3 1247.7,692.0 1249.8,692.6 1252.0,693.5 1254.2,694.3 1256.4,695.0 1258.6,695.6 1260.8,696.1 1262.9,696.6 1265.1,697.0 1267.3,697.3 1269.5,697.6 1271.5,697.8 1273.5,698.0 1275.5,698.1 1277.5,698.2 1279.6,698.3 1281.6,698.3 1283.6,698.3 1285.6,698.3 1287.6,698.3 1289.6,698.2 1291.6,698.1 1293.6,698.0 1295.6,697.8 1297.6,697.6 1299.7,697.3 1301.7,696.9 1303.8,696.4 1305.8,695.9 1307.9,695.3 1309.9,694.7 1312.0,694.0 1314.0,693.3 1316.1,692.6 1318.1,691.9 1320.2,691.2 1322.3,690.5 1324.4,689.8 1326.5,689.1 1328.6,688.3 1330.7,687.6 1332.8,686.8 1334.9,686.0 1337.0,685.1 1339.2,684.2 1341.3,683.3 1343.4,682.3 1345.5,681.3 1347.7,679.8 1349.9,678.1 1352.0,676.3 1354.2,674.4 1356.4,672.5 1358.6,670.7 1360.8,668.9 1363.0,667.3 1365.2,665.8 1367.3,664.5 1369.4,663.3 1371.5,662.2 1373.6,661.3 1375.7,660.4 1377.8,659.4 1379.9,658.5 1382.1,657.4 1384.2,656.4 1386.4,655.3 1388.6,654.2 1390.8,653.0 1393.0,651.9 1395.2,650.8 1397.4,649.7 1399.6,648.6 1401.8,647.5 1403.9,646.5 1406.1,645.6 1408.3,644.6 1410.5,643.6 1412.7,642.7 1414.9,641.8 1417.1,640.9 1419.3,640.0 1421.5,639.1 1423.5,638.2 1425.6,637.2 1427.6,636.3 1429.7,635.3 1431.8,634.4 1433.8,633.6 1435.9,632.8 1438.0,632.1 1440.0,631.5 1442.5,629.8 1444.6,629.4 1446.7,628.9 1448.8,628.3 1451.0,627.7 1453.1,627.2 1455.2,626.6 1457.3,626.2 1459.4,625.9 1461.5,625.6 1463.6,625.5 1465.7,625.3 1467.8,625.2 1469.9,625.3 1472.1,625.4 1474.2,625.6 1476.3,625.9 1478.3,626.1 1480.3,626.4 1482.3,626.8 1484.3,627.2 1486.3,627.7 1488.3,628.1 1490.3,628.6 1492.4,629.1 1494.4,629.6 1496.4,630.2 1498.4,630.7 1500.4,631.2 1502.4,631.6 1504.4,632.1 1506.6,632.7 1508.8,633.3 1511.0,634.0 1513.2,634.6 1515.4,635.2 1517.5,635.8 1519.7,636.4 1521.9,637.0 1524.1,637.7 1526.2,638.1 1528.2,638.5 1530.3,639.0 1532.4,639.5 1534.4,639.9 1536.5,640.4 1538.6,640.9 1540.6,641.3 1542.7,641.8 1544.7,642.3 1546.8,642.7 1548.9,643.1 1550.9,643.5 1553.0,643.8 1555.1,644.2 1557.1,644.4 1559.2,644.6 1561.2,644.8 1563.3,644.9 1565.4,645.0 1567.4,645.1 1569.5,645.1 1571.6,645.2 1573.6,645.3 1575.7,645.4 1577.8,645.6 1579.8,645.8 1581.9,646.1 1583.9,646.5 1586.0,647.0 1588.1,647.6 1590.1,648.3 1592.2,649.1 1594.3,649.9 1596.3,650.8 1598.4,651.8 1600.5,652.8 1602.5,653.8 1604.6,654.9 1606.6,655.9 1608.7,656.9 1610.8,657.8 1612.8,658.7 1614.9,659.5 1617.0,660.2 1619.1,661.4 1621.2,662.3 1623.3,663.2 1625.4,663.9 1627.5,664.7 1629.6,665.4 1631.7,666.3 1633.8,667.2 1636.0,668.4 1638.1,669.6 1640.2,670.9 1642.3,672.3 1644.4,673.6 1646.5,674.9 1648.6,676.0 1650.7,677.1 1653.0,678.2 1655.2,679.2 1657.5,680.1 1659.7,680.9 1662.0,681.6 1664.2,682.2 1666.5,682.7" fill="none" stroke="#ffa500" stroke-width="2" />
<polyline points="2.8,777.0 4.9,777.0 6.9,777.0 9.0,777.1 11.1,777.2 13.1,777.3 15.2,777.4 17.3,777.5 19.3,777.5 21.4,777.6 23.4,777.6 25.5,777.6 27.6,777.5 29.6,777.4 31.7,777.2 33.8,777.0 35.8,776.7 37.9,776.3 40.0,775.9 42.0,775.4 44.1,774.9 46.1,774.3 48.2,773.7 50.3,773.1 52.3,772.5 54.4,771.8 56.5,771.1 58.5,770.5 60.6,769.8 62.7,769.2 64.7,768.5 66.8,767.9 68.8,767.2 70.9,766.6 73.0,765.9 75.0,765.2 77.1,764.5 79.2,763.7 81.2,763.0 83.3,762.3 85.3,761.6 87.4,760.9 89.5,760.2 91.5,759.5 93.6,758.8 95.7,758.1 97.7,757.5 99.8,756.8 101.9,756.2 103.9,755.5 106.0,754.9 108.0,754.3 110.1,753.7 112.2,753.1 114.2,752.4 116.3,751.8 118.4,751.2 120.4,750.6 122.5,750.0 124.6,749.4 126.6,748.8 128.7,748.3 130.8,747.8 132.9,747.2 135.1,746.7 137.2,746.2 139.3,745.7 141.4,745.2 143.5,744.7 145.6,744.2 147.7,743.7 149.8,743.2 151.9,742.7 154.1,742.1 156.2,741.6 158.3,741.0 160.4,740.4 162.4,739.7 164.5,739.0 166.6,738.3 168.6,737.6 170.7,736.9 172.8,736.2 174.8,735.4 176.9,734.7 179.0,733.9 181.0,733.1 183.1,732.3 185.1,731.5 187.2,730.7 189.3,729.9 191.3,729.1 193.4,728.4 195.6,727.6 197.7,726.7 199.8,725.9 201.9,725.0 204.0,724.2 206.1,723.3 208.2,722.4 210.3,721.6 212.4,720.7 214.5,719.9 216.7,719.1 218.8,718.4 220.9,717.7 223.0,717.1 225.1,716.5 227.2,716.0 229.2,715.5 231.3,715.2 233.4,714.9 235.4,714.6 237.5,714.4 239.5,714.2 241.6,714.1 243.7,713.9 245.7,713.6 247.8,713.4 249.9,713.1 251.9,712.7 254.0,712.3 256.0,711.7 258.2,711.1 260.3,710.4 262.4,709.8 264.5,709.0 266.6,708.2 268.7,707.4 270.8,706.6 272.9,705.7 275.0,704.8 277.2,703.9 279.3,703.0 281.4,702.0 283.5,701.1 285.6,700.1 287.7,699.1 289.8,698.2 291.9,697.1 293.9,696.0 296.0,694.8 298.1,693.6 300.1,692.4 302.2,691.1 304.3,689.8 306.3,688.6 308.4,687.4 310.4,686.2 312.5,685.0 314.6,684.0 316.6,683.0 318.7,682.1 320.8,681.3 322.9,680.7 325.0,680.1 327.1,679.6 329.2,679.2 331.3,678.9 333.4,678.6 335.5,678.3 337.6,678.1 339.8,677.9 341.9,677.7 344.0,677.5 346.1,677.4 348.2,677.2 350.3,677.0 352.4,676.8 354.5,676.5 356.6,676.2 358.7,675.9 360.7,675.6 362.8,675.4 364.8,675.1 366.9,674.8 369.0,674.5 371.0,674.2 373.1,674.0 375.2,673.7 377.2,673.5 379.3,673.3 381.4,673.1 383.4,673.0 385.5,672.9 387.5,672.8 389.6,672.8 391.7,672.8 393.7,672.9 395.8,673.0 397.9,673.1 399.9,673.3 402.0,673.4 404.1,673.5 406.1,673.6 408.2,673.7 410.2,673.8 412.3,673.8 414.4,673.8 416.4,673.7 418.5,673.6 420.7,673.5 422.8,673.3 424.9,673.1 427.0,672.9 429.1,672.7 431.2,672.4 433.3,672.1 435.4,671.9 437.5,671.6 439.6,671.3 441.8,670.9 443.9,670.6 446.0,670.2 448.1,669.9 450.2,669.5 452.3,669.0 454.5,668.5 456.6,667.9 458.7,667.2 460.8,666.6 463.0,665.9 465.1,665.2 467.2,664.5 469.4,663.9 471.5,663.3 473.6,662.8 475.7,662.3 477.9,661.9 480.0,661.6 482.1,661.4 484.2,661.4 486.3,661.3 488.4,661.3 490.6,661.4 492.7,661.5 494.8,661.6 496.9,661.8 499.0,662.0 501.1,662.1 503.2,662.3 505.3,662.5 507.4,662.7 509.5,662.8 511.7,662.9 513.8,663.0 515.8,663.1 517.9,663.1 520.0,663.2 522.0,663.2 524.1,663.3 526.1,663.3 528.2,663.4 530.3,663.4 532.3,663.4 534.4,663.4 536.5,663.5 538.5,663.5 540.6,663.5 542.7,663.6 544.7,663.6 546.8,663.6 548.8,663.6 550.9,663.5 553.0,663.4 555.0,663.3 557.1,663.2 559.2,663.1 561.2,663.1 563.3,663.0 565.3,663.0 567.4,663.1 569.5,663.2 571.5,663.3 573.6,663.6 575.7,663.9 577.7,664.4 579.8,665.2 581.8,666.1 583.9,667.1 585.9,668.1 587.9,669.3 590.0,670.4 592.0,671.5 594.1,672.5 596.1,673.4 598.2,674.3 600.3,675.0 602.4,675.6 604.5,676.3 606.6,677.0 608.7,677.6 610.8,678.1 612.9,678.7 615.1,679.2 617.2,679.6 619.3,680.0 621.4,680.2 623.5,680.5 625.6,680.6 627.7,680.5 629.8,680.4 631.9,680.2 634.1,679.9 636.2,679.6 638.3,679.3 640.4,679.0 642.5,678.8 644.6,678.6 646.7,678.5 648.8,678.5 650.9,678.6 653.0,678.6 655.2,678.7 657.3,678.8 659.4,678.9 661.5,679.1 663.6,679.4 665.7,679.7 667.8,680.1 669.9,680.7 672.0,681.3 674.1,682.2 676.3,683.5 678.5,685.2 680.7,687.2 682.9,689.4 685.1,691.6 687.3,693.8 689.5,696.0 691.7,697.9 693.8,699.6 696.0,700.7 698.1,701.7 700.2,702.6 702.3,703.5 704.4,704.3 706.5,705.0 708.6,705.8 710.7,706.5 712.8,707.2 714.9,707.9 717.1,708.7 719.2,709.4 721.2,710.3 723.3,711.3 725.3,712.2 727.4,713.1 729.4,714.1 731.4,715.0 733.5,715.9 735.5,716.7 737.6,717.4 739.6,718.1 741.7,718.7 743.7,719.1 745.7,719.5 747.7,719.7 749.7,719.9 751.7,720.1 753.7,720.3 755.7,720.4 757.8,720.5 759.8,720.7 761.8,720.8 763.8,720.9 765.8,721.1 767.8,721.3 769.8,721.5 771.9,721.8 773.9,722.1 776.0,722.5 778.1,722.8 780.1,723.2 782.2,723.6 784.3,724.0 786.3,724.4 788.4,724.8 790.4,725.1 792.5,725.4 794.6,725.7 796.6,726.0 798.7,726.2 800.8,726.3 802.9,726.4 805.0,726.4 807.1,726.4 809.2,726.3 811.3,726.3 813.4,726.1 815.5,726.0 817.6,725.8 819.8,725.7 821.9,725.5 824.0,725.4 826.1,725.2 828.2,725.1 830.3,725.0 832.4,724.9 834.5,724.9 836.6,724.9 838.7,724.9 840.7,725.0 842.8,725.0 844.8,725.1 846.9,725.1 849.0,725.2 851.0,725.3 853.1,725.4 855.2,725.5 857.2,725.6 859.3,725.8 861.4,726.0 863.4,726.1 865.5,726.3 867.5,726.5 869.6,726.8 871.7,727.0 873.7,727.3 875.8,727.6 877.9,727.9 879.9,728.2 882.0,728.5 884.1,728.8 886.1,729.2 888.2,729.5 890.2,729.9 892.3,730.3 894.4,730.7 896.4,731.1 898.5,731.5 900.7,731.9 902.8,732.4 904.9,732.9 907.0,733.3 909.1,733.8 911.2,734.3 913.3,734.8 915.4,735.3 917.5,735.9 919.6,736.4 921.8,736.9 923.9,737.4 926.0,738.0 928.1,738.5 930.2,739.0 932.3,739.6 934.5,740.2 936.6,740.8 938.7,741.4 940.8,742.0 943.0,742.6 945.1,743.3 947.2,743.9 949.4,744.5 951.5,745.1 953.6,745.7 955.7,746.3 957.9,746.9 960.0,747.4 962.2,748.3 964.4,749.1 966.6,749.9 968.8,750.7 970.9,751.5 973.1,752.3 975.3,753.0 977.5,753.8 979.7,754.5 981.7,754.9 983.7,755.3 985.7,755.8 987.7,756.2 989.7,756.6 991.8,757.0 993.8,757.4 995.8,757.8 997.8,758.1 999.8,758.5 1001.8,758.9 1003.8,759.3 1005.8,759.7 1007.8,760.1 1009.9,760.6 1012.1,761.1 1014.2,761.6 1016.3,762.1 1018.4,762.6 1020.5,763.1 1022.6,763.6 1024.7,764.1 1026.8,764.5 1028.9,764.9 1031.0,765.4 1033.2,765.7 1035.2,766.1 1037.2,766.4 1039.3,766.8 1041.3,767.1 1043.4,767.3 1045.4,767.6 1047.5,767.8 1049.5,768.0 1051.6,768.2 1053.6,768.4 1055.7,768.5 1057.7,768.6 1059.8,768.7 1061.9,768.7 1064.0,768.7 1066.0,768.8 1068.1,768.8 1070.2,768.8 1072.3,768.8 1074.3,768.8 1076.4,768.8 1078.5,768.8 1080.5,768.8 1082.6,768.7 1084.7,768.7 1086.8,768.7 1088.8,768.6 1090.9,768.6 1093.0,768.6 1095.1,768.5 1097.2,768.5 1099.3,768.4 1101.4,768.3 1103.5,768.1 1105.6,768.0 1107.7,767.9 1109.8,767.7 1111.9,767.6 1114.1,767.5 1116.2,767.3 1118.3,767.2 1120.4,767.1 1122.5,767.1 1124.6,767.0 1126.7,766.9 1128.8,766.9 1130.9,766.8 1133.0,766.7 1135.2,766.7 1137.3,766.6 1139.4,766.5 1141.5,766.5 1143.6,766.4 1145.7,766.4 1147.8,766.4 1149.9,766.3 1152.0,766.3 1154.1,766.3 1156.2,766.3 1158.3,766.3 1160.4,766.3 1162.5,766.3 1164.5,766.4 1166.6,766.4 1168.7,766.5 1170.8,766.5 1172.9,766.6 1174.9,766.6 1177.0,766.7 1179.1,766.7 1181.2,766.8 1183.3,766.8 1185.3,766.8 1187.4,766.8 1189.5,766.8 1191.6,766.8 1193.7,766.8 1195.7,766.8 1197.8,766.7 1199.9,766.7 1202.0,766.6 1204.1,766.3 1206.2,766.1 1208.3,765.8 1210.4,765.5 1212.5,765.1 1214.6,764.8 1216.8,764.3 1218.9,763.8 1221.0,763.3 1223.1,762.8 1225.2,762.2 1227.3,761.5 1229.4,760.7 1231.4,759.8 1233.4,758.8 1235.5,757.7 1237.5,756.6 1239.6,755.5 1241.6,754.4 1243.7,753.3 1245.7,752.2 1247.8,751.2 1249.8,750.2 1251.9,749.4 1254.0,748.7 1256.1,747.9 1258.3,747.2 1260.4,746.5 1262.5,745.8 1264.6,745.1 1266.7,744.4 1268.8,743.7 1270.9,743.1 1273.0,742.4 1275.1,741.8 1277.2,741.2 1279.4,740.5 1281.5,739.9 1283.6,739.3 1285.7,738.7 1287.8,738.1 1289.9,737.5 1292.0,736.9 1294.1,736.3 1296.2,735.8 1298.4,735.3 1300.5,734.8 1302.5,733.9 1304.5,733.1 1306.5,732.3 1308.5,731.6 1310.5,730.9 1312.5,730.4 1314.5,730.0 1316.7,729.8 1318.9,729.6 1321.1,729.6 1323.3,729.6 1325.5,729.6 1327.7,729.7 1329.8,729.8 1332.0,729.9 1334.2,730.0 1336.3,730.0 1338.4,730.1 1340.4,730.2 1342.5,730.3 1344.5,730.4 1346.6,730.5 1348.7,730.6 1350.7,730.7 1352.8,730.9 1354.9,731.0 1356.9,731.1 1359.0,731.2 1361.1,731.3 1363.1,731.3 1365.2,731.4 1367.2,731.5 1369.2,731.5 1371.2,731.6 1373.2,731.7 1375.2,731.8 1377.2,731.9 1379.2,732.0 1381.3,732.0 1383.3,732.0 1385.3,732.0 1387.3,731.9 1389.3,731.8 1391.3,731.6 1393.3,731.4 1395.4,730.8 1397.5,730.0 1399.6,729.1 1401.8,728.1 1403.9,727.0 1406.0,725.8 1408.1,724.6 1410.2,723.5 1412.3,722.4 1414.4,721.3 1416.5,720.2 1418.6,719.0 1420.7,717.8 1422.9,716.5 1425.0,715.1 1427.1,713.7 1429.2,711.4 1431.4,708.9 1433.6,706.2 1435.7,703.6 1437.9,701.3 1440.0,699.6 1442.5,696.8 1444.6,695.7 1446.7,694.2 1448.8,692.6 1451.0,690.9 1453.1,689.1 1455.2,687.3 1457.3,685.6 1459.4,684.1 1461.6,682.4 1463.8,680.5 1466.0,678.7 1468.2,677.0 1470.4,675.6 1472.7,674.6 1474.9,674.3 1477.0,674.4 1479.1,674.7 1481.2,675.1 1483.3,675.7 1485.4,676.4 1487.5,677.2 1489.6,678.1 1491.8,679.0 1493.9,680.0 1496.0,680.9 1498.1,681.8 1500.2,682.7 1502.3,683.4 1504.4,684.1 1506.6,685.1 1508.8,686.0 1511.0,686.8 1513.2,687.6 1515.4,688.4 1517.5,689.2 1519.7,690.1 1521.9,690.9 1524.1,691.7 1526.2,692.2 1528.2,692.7 1530.3,693.2 1532.4,693.7 1534.4,694.1 1536.5,694.6 1538.6,695.1 1540.6,695.6 1542.7,696.1 1544.7,696.6 1546.8,697.1 1548.9,697.7 1550.9,698.3 1553.0,698.9 1555.1,699.6 1557.1,700.3 1559.2,701.1 1561.2,701.9 1563.3,702.8 1565.4,703.7 1567.4,704.7 1569.5,705.6 1571.6,706.5 1573.6,707.5 1575.7,708.4 1577.8,709.3 1579.8,710.1 1581.9,710.9 1583.9,711.6 1586.0,712.3 1588.1,712.8 1590.1,713.4 1592.2,713.9 1594.3,714.3 1596.3,714.8 1598.4,715.2 1600.5,715.5 1602.5,715.9 1604.6,716.2 1606.6,716.5 1608.7,716.8 1610.8,717.1 1612.8,717.3 1614.9,717.6 1617.0,717.9 1619.1,718.4 1621.2,718.7 1623.3,719.0 1625.4,719.3 1627.5,719.6 1629.6,719.9 1631.7,720.2 1633.8,720.7 1636.0,721.3 1638.1,722.0 1640.2,722.7 1642.3,723.5 1644.4,724.2 1646.5,725.0 1648.6,725.7 1650.7,726.3 1653.0,727.0 1655.2,727.6 1657.5,728.2 1659.7,728.8 1662.0,729.3 1664.2,729.7 1666.5,730.0" fill="none" stroke="#800080" stroke-width="2" />
<polyline points="2.8,810.7 4.8,810.7 6.8,810.7 8.8,810.6 10.9,810.6 12.9,810.6 14.9,810.6 16.9,810.7 19.0,810.9 21.1,811.0 23.2,811.1 25.3,811.3 27.4,811.6 29.5,811.9 31.7,812.4 33.8,813.0 35.8,813.4 37.9,813.9 40.0,814.4 42.0,815.0 44.1,815.6 46.1,816.2 48.2,816.9 50.3,817.5 52.3,818.2 54.4,818.9 56.5,819.6 58.5,820.2 60.6,820.8 62.7,821.4 64.7,822.0 66.8,822.5 68.8,823.1 70.9,823.6 73.0,824.1 75.0,824.6 77.1,825.2 79.2,825.7 81.2,826.1 83.3,826.6 85.3,827.1 87.4,827.5 89.5,827.9 91.5,828.3 93.6,828.7 95.7,829.0 97.7,829.3 99.8,829.6 101.9,829.9 103.9,830.2 106.0,830.4 108.0,830.6 110.1,830.8 112.2,831.0 114.2,831.1 116.3,831.3 118.4,831.4 120.4,831.5 122.5,831.6 124.6,831.7 126.6,831.8 128.7,831.9 130.8,832.0 132.9,832.0 135.1,832.0 137.2,832.0 139.3,832.0 141.4,831.9 143.5,831.9 145.6,831.8 147.7,831.8 149.8,831.8 151.9,831.8 154.1,831.7 156.2,831.8 158.3,831.8 160.4,831.8 162.4,831.9 164.5,832.0 166.6,832.1 168.6,832.3 170.7,832.4 172.8,832.5 174.8,832.7 176.9,832.8 179.0,833.0 181.0,833.2 183.1,833.4 185.1,833.5 187.2,833.7 189.3,833.9 191.3,834.1 193.4,834.3 195.6,834.5 197.7,834.7 199.8,834.9 201.9,835.2 204.0,835.4 206.1,835.6 208.2,835.9 210.3,836.1 212.4,836.4 214.5,836.6 216.7,836.8 218.8,837.0 220.9,837.2 223.0,837.3 225.1,837.5 227.2,837.6 229.2,837.7 231.3,837.7 233.4,837.8 235.4,837.8 237.5,837.8 239.5,837.8 241.6,837.8 243.7,837.8 245.7,837.8 247.8,837.8 249.9,837.8 251.9,837.9 254.0,837.9 256.0,838.0 258.2,838.2 260.3,838.3 262.4,838.5 264.5,838.6 266.6,838.8 268.7,839.0 270.8,839.2 272.9,839.4 275.0,839.6 277.2,839.8 279.3,840.1 281.4,840.3 283.5,840.5 285.6,840.7 287.7,840.9 289.8,841.1 291.9,841.4 293.9,841.6 296.0,841.9 298.1,842.2 300.1,842.5 302.2,842.8 304.3,843.0 306.3,843.3 308.4,843.6 310.4,843.8 312.5,844.0 314.6,844.2 316.6,844.4 318.7,844.5 320.8,844.5 322.9,844.5 325.0,844.5 327.1,844.4 329.2,844.3 331.3,844.1 333.4,844.0 335.5,843.8 337.6,843.6 339.8,843.4 341.9,843.1 344.0,842.9 346.1,842.6 348.2,842.4 350.3,842.2 352.4,841.9 354.5,841.7 356.6,841.5 358.7,841.2 360.7,841.0 362.8,840.8 364.8,840.6 366.9,840.4 369.0,840.1 371.0,839.9 373.1,839.6 375.2,839.3 377.2,839.0 379.3,838.7 381.4,838.3 383.4,837.9 385.5,837.5 387.5,837.0 389.6,836.4 391.7,835.8 393.7,835.2 395.8,834.5 397.9,833.8 399.9,833.1 402.0,832.4 404.1,831.6 406.1,830.9 408.2,830.2 410.2,829.5 412.3,828.8 414.4,828.2 416.4,827.6 418.5,827.1 420.7,826.6 422.8,826.0 424.9,825.5 427.0,825.0 429.1,824.5 431.2,824.0 433.3,823.5 435.4,823.0 437.5,822.6 439.6,822.2 441.8,821.8 443.9,821.4 446.0,821.1 448.1,820.8 450.2,820.6 452.2,820.2 454.2,820.0 456.2,819.9 458.2,819.9 460.2,820.1 462.3,820.3 464.3,820.6 466.5,821.1 468.8,821.9 471.0,822.8 473.3,823.8 475.5,824.5 477.8,824.9 480.0,824.8 482.1,824.6 484.2,824.3 486.3,823.9 488.4,823.4 490.6,822.9 492.7,822.3 494.8,821.7 496.9,821.0 499.0,820.3 501.1,819.6 503.2,818.8 505.3,818.0 507.4,817.3 509.5,816.5 511.7,815.7 513.8,815.0 515.8,814.1 517.9,813.3 520.0,812.4 522.0,811.5 524.1,810.5 526.1,809.6 528.2,808.6 530.3,807.6 532.3,806.6 534.4,805.6 536.5,804.7 538.5,803.7 540.6,802.7 542.7,801.8 544.7,800.9 546.8,800.0 548.8,799.1 550.9,798.1 553.0,797.2 555.0,796.3 557.1,795.4 559.2,794.4 561.2,793.6 563.3,792.7 565.3,791.8 567.4,791.0 569.5,790.3 571.5,789.5 573.6,788.9 575.7,788.2 577.7,787.7 579.8,787.1 581.9,786.7 583.9,786.2 586.0,785.8 588.0,785.4 590.1,785.1 592.2,784.8 594.2,784.5 596.3,784.2 598.4,784.0 600.4,783.7 602.5,783.5 604.6,783.3 606.6,783.2 608.7,783.0 610.8,782.8 612.9,782.7 615.1,782.7 617.2,782.6 619.3,782.6 621.4,782.7 623.5,782.7 625.6,782.8 627.7,782.9 629.8,783.0 631.9,783.2 634.0,783.3 636.0,783.5 638.0,783.7 640.0,784.0 642.0,784.2 644.0,784.5 646.0,784.8 648.0,785.1 650.0,785.4 652.0,785.7 654.0,786.0 656.1,786.3 658.1,786.6 660.1,786.8 662.1,787.3 664.1,787.9 666.1,788.4 668.1,788.9 670.1,789.3 672.1,789.5 674.1,789.6 676.3,789.5 678.5,789.3 680.7,789.0 682.9,788.5 685.1,788.1 687.3,787.7 689.5,787.3 691.7,787.0 693.8,786.8 696.0,786.8 698.1,786.8 700.2,786.8 702.3,786.9 704.4,787.0 706.5,787.2 708.6,787.3 710.7,787.5 712.8,787.7 714.9,787.9 717.1,788.1 719.2,788.2 721.2,788.4 723.2,788.6 725.2,788.7 727.2,788.9 729.2,789.1 731.2,789.3 733.2,789.5 735.2,789.7 737.3,789.9 739.3,790.1 741.3,790.4 743.3,790.6 745.3,790.8 747.3,791.0 749.3,791.3 751.3,791.5 753.3,791.8 755.3,792.0 757.4,792.2 759.4,792.5 761.4,792.8 763.4,793.0 765.4,793.3 767.4,793.6 769.4,793.8 771.4,794.1 773.4,794.4 775.4,794.7 777.6,795.1 779.7,795.4 781.8,795.8 783.9,796.2 786.0,796.6 788.1,797.0 790.2,797.4 792.3,797.8 794.4,798.2 796.5,798.6 798.7,799.1 800.8,799.5 803.0,800.1 805.1,800.8 807.3,801.5 809.5,802.2 811.7,803.0 813.9,803.6 816.1,804.2 818.3,804.7 820.5,805.1 822.6,805.3 824.7,805.5 826.8,805.6 828.9,805.6 831.0,805.7 833.1,805.6 835.2,805.6 837.3,805.5 839.5,805.4 841.6,805.3 843.7,805.2 845.8,805.1 847.8,805.0 849.9,804.9 851.9,804.8 854.0,804.7 856.0,804.6 858.1,804.4 860.1,804.2 862.2,803.9 864.2,803.4 866.2,802.9 868.3,802.3 870.5,801.3 872.7,800.0 874.9,798.6 877.0,797.0 879.2,795.4 881.4,793.8 883.6,792.3 885.8,790.9 888.0,789.6 890.1,788.8 892.2,788.1 894.3,787.4 896.4,786.7 898.5,786.0 900.7,785.4 902.8,784.9 904.9,784.3 907.0,783.8 909.1,783.4 911.2,783.0 913.3,782.6 915.4,782.2 917.5,782.1 919.6,782.2 921.8,782.3 923.9,782.3 926.0,782.2 928.1,781.9 930.2,781.2 932.3,780.6 934.5,779.9 936.6,779.1 938.7,778.2 940.8,777.2 943.0,776.1 945.1,775.1 947.2,774.0 949.4,772.9 951.5,771.9 953.6,770.9 955.7,770.0 957.9,769.2 960.0,768.5 962.1,768.0 964.2,767.5 966.3,767.1 968.4,766.7 970.6,766.3 972.7,766.0 974.8,765.7 976.9,765.4 979.0,765.1 981.1,764.9 983.2,764.7 985.3,764.5 987.4,764.3 989.5,764.1 991.7,763.9 993.8,763.8 995.8,763.6 997.9,763.5 1000.0,763.3 1002.0,763.3 1004.1,763.2 1006.1,763.2 1008.2,763.2 1010.3,763.1 1012.3,763.1 1014.4,763.1 1016.5,763.1 1018.5,763.1 1020.6,763.0 1022.7,763.0 1024.7,762.9 1026.8,762.8 1028.9,762.6 1031.0,762.5 1033.2,762.4 1035.3,762.2 1037.4,761.9 1039.5,761.5 1041.6,760.9 1043.6,760.4 1045.7,759.8 1047.7,759.1 1049.8,758.4 1051.8,757.5 1053.9,756.7 1055.9,755.9 1058.0,755.1 1060.0,754.3 1062.1,753.7 1064.1,753.1 1066.2,752.5 1068.2,752.0 1070.2,751.5 1072.3,751.0 1074.3,750.5 1076.4,750.1 1078.4,749.8 1080.5,749.4 1082.5,749.2 1084.6,749.0 1086.6,748.8 1088.7,748.8 1090.8,748.8 1092.9,748.9 1095.1,749.0 1097.2,749.2 1099.3,749.5 1101.4,749.7 1103.5,749.9 1105.6,750.2 1107.7,750.4 1109.8,750.6 1111.9,750.8 1114.0,750.9 1116.0,751.0 1118.0,751.1 1120.0,751.2 1122.0,751.2 1124.0,751.3 1126.0,751.4 1128.0,751.5 1130.0,751.6 1132.0,751.6 1134.0,751.7 1136.1,751.8 1138.1,751.9 1140.1,752.0 1142.1,752.0 1144.1,752.1 1146.1,752.2 1148.1,752.3 1150.1,752.3 1152.1,752.4 1154.1,752.5 1156.2,752.6 1158.3,752.7 1160.3,752.7 1162.4,752.7 1164.5,752.8 1166.5,752.8 1168.6,752.8 1170.7,752.9 1172.7,752.9 1174.8,753.0 1176.8,753.1 1178.9,753.2 1181.0,753.4 1183.0,753.6 1185.1,753.9 1187.2,754.2 1189.2,754.6 1191.3,755.0 1193.4,755.5 1195.4,756.0 1197.5,756.5 1199.5,757.1 1201.6,757.6 1203.7,758.2 1205.7,758.8 1207.8,759.4 1209.9,759.9 1211.9,760.5 1214.0,761.0 1216.0,761.5 1218.2,762.1 1220.3,762.7 1222.4,763.3 1224.5,763.9 1226.6,764.5 1228.7,765.1 1230.8,765.7 1232.9,766.3 1235.0,766.9 1237.2,767.5 1239.3,768.0 1241.4,768.5 1243.4,769.0 1245.4,769.4 1247.4,769.9 1249.4,770.3 1251.4,770.8 1253.4,771.2 1255.4,771.6 1257.5,772.1 1259.5,772.5 1261.5,772.8 1263.5,773.2 1265.5,773.5 1267.5,773.9 1269.5,774.2 1271.5,774.7 1273.5,775.1 1275.5,775.5 1277.5,775.8 1279.6,776.0 1281.6,776.2 1283.6,776.4 1285.6,776.5 1287.7,776.5 1289.7,776.6 1291.8,776.6 1293.8,776.7 1295.9,776.7 1297.9,776.8 1299.9,776.8 1302.0,776.8 1304.0,776.9 1306.1,776.9 1308.1,776.9 1310.2,776.9 1312.2,776.9 1314.3,776.9 1316.3,776.8 1318.4,776.8 1320.4,776.8 1322.5,776.7 1324.5,776.6 1326.6,776.5 1328.6,776.4 1330.8,776.1 1333.0,775.8 1335.2,775.4 1337.4,774.9 1339.5,774.4 1341.7,773.8 1343.9,773.1 1346.1,772.3 1348.3,771.3 1350.5,770.3 1352.7,769.0 1354.9,767.7 1357.0,766.2 1359.2,764.7 1361.4,763.2 1363.6,761.6 1365.8,760.1 1368.0,758.7 1370.2,757.2 1372.4,755.8 1374.6,754.3 1376.7,752.8 1378.9,751.3 1381.1,749.8 1383.3,748.5 1385.5,747.2 1387.7,746.0 1389.8,744.9 1391.9,743.9 1394.0,743.0 1396.1,742.2 1398.2,741.5 1400.3,740.7 1402.5,739.9 1404.6,739.0 1406.8,738.1 1408.9,737.2 1411.1,736.3 1413.3,735.3 1415.5,734.4 1417.7,733.4 1419.9,732.5 1422.1,731.5 1424.3,730.5 1426.5,729.3 1428.8,727.9 1431.0,726.6 1433.3,725.2 1435.5,724.0 1437.8,722.9 1440.0,722.1 1442.5,720.7 1444.6,720.2 1446.7,719.7 1448.8,719.0 1451.0,718.3 1453.1,717.6 1455.2,716.9 1457.3,716.4 1459.4,715.9 1461.5,715.7 1463.6,715.5 1465.7,715.5 1467.8,715.5 1469.9,715.6 1472.1,715.5 1474.2,715.4 1476.3,715.1 1478.3,714.8 1480.3,714.5 1482.3,714.1 1484.3,713.7 1486.3,713.2 1488.3,712.8 1490.3,712.3 1492.4,711.8 1494.4,711.3 1496.4,710.9 1498.4,710.5 1500.4,710.1 1502.4,709.7 1504.4,709.4 1506.6,709.1 1508.8,708.9 1511.0,708.8 1513.2,708.7 1515.4,708.6 1517.5,708.6 1519.7,708.5 1521.9,708.3 1524.1,708.0 1526.2,707.8 1528.2,707.7 1530.3,707.4 1532.4,707.2 1534.4,707.0 1536.5,706.8 1538.6,706.5 1540.6,706.2 1542.7,705.9 1544.7,705.6 1546.8,705.3 1548.9,705.0 1550.9,704.6 1553.0,704.2 1555.1,703.8 1557.1,703.4 1559.2,702.9 1561.2,702.4 1563.3,701.9 1565.4,701.4 1567.4,700.8 1569.5,700.2 1571.6,699.7 1573.6,699.1 1575.7,698.5 1577.8,697.8 1579.8,697.2 1581.9,696.6 1583.9,696.0 1586.0,695.4 1588.1,694.8 1590.1,694.1 1592.2,693.5 1594.3,692.8 1596.3,692.1 1598.4,691.4 1600.5,690.7 1602.5,690.0 1604.6,689.3 1606.6,688.7 1608.7,688.0 1610.8,687.3 1612.8,686.7 1614.9,686.1 1617.0,685.5 1619.1,684.6 1621.2,683.7 1623.3,682.9 1625.4,682.2 1627.5,681.4 1629.6,680.5 1631.7,679.6 1633.8,678.5 1636.0,677.2 1638.1,675.7 1640.2,674.0 1642.3,672.3 1644.4,670.6 1646.5,669.0 1648.6,667.6 1650.7,666.4 1653.0,665.3 1655.2,664.4 1657.5,663.6 1659.7,662.9 1662.0,662.4 1664.2,662.0 1666.5,661.6" fill="none" stroke="#008000" stroke-width="2" />
</g>
<rect x="3" y="901" width="7" height="1" fill="#20b2aa"/>
<rect x="10" y="900" width="113" height="1" fill="#20b2aa"/>
<rect x="123" y="901" width="80" height="1" fill="#20b2aa"/>
<rect x="203" y="902" width="352" height="1" fill="#20b2aa"/>
<rect x="650" y="902" width="321" height="1" fill="#20b2aa"/>
<rect x="1049" y="902" width="48" height="1" fill="#20b2aa"/>
<rect x="1097" y="901" width="241" height="1" fill="#20b2aa"/>
<rect x="1338" y="900" width="49" height="1" fill="#20b2aa"/>
<rect x="1387" y="901" width="31" height="1" fill="#20b2aa"/>
<rect x="1418" y="900" width="49" height="1" fill="#20b2aa"/>
<rect x="1467" y="899" width="176" height="1" fill="#20b2aa"/>
<rect x="1643" y="900" width="16" height="1" fill="#20b2aa"/>
<rect x="1659" y="901" width="8" height="1" fill="#20b2aa"/>
<rect x="1868" y="30" width="4" height="1" fill="#ffffff"/>
<text x="1873.5" y="34" font-size="10" fill="#ffffff" textLength="32" lengthAdjust="spacingAndGlyphs">1.17760</text>
<rect x="1868" y="62" width="4" height="1" fill="#ffffff"/>
<text x="1873.5" y="66" font-size="10" fill="#ffffff" textLength="32" lengthAdjust="spacingAndGlyphs">1.17690</text>
<rect x="1868" y="93" width="4" height="1" fill="#ffffff"/>
<text x="1873.5" y="97" font-size="10" fill="#ffffff" textLength="32" lengthAdjust="spacingAndGlyphs">1.17620</text>
<rect x="1868" y="124" width="4" height="1" fill="#ffffff"/>
<text x="1873.5" y="128" font-size="10" fill="#ffffff" textLength="32" lengthAdjust="spacingAndGlyphs">1.17550</text>
<rect x="1868" y="156" width="4" height="1" fill="#ffffff"/>
<text x="1873.5" y="160" font-size="10" fill="#ffffff" textLength="32" lengthAdjust="spacingAndGlyphs">1.17480</text>
<rect x="1868" y="188" width="4" height="1" fill="#ffffff"/>
<text x="1873.5" y="192" font-size="10" fill="#ffffff" textLength="32" lengthAdjust="spacingAndGlyphs">1.17410</text>
<rect x="1868" y="219" width="4" height="1" fill="#ffffff"/>
<text x="1873.5" y="223" font-size="10" fill="#ffffff" textLength="32" lengthAdjust="spacingAndGlyphs">1.17340</text>
<rect x="1868" y="250" width="4" height="1" fill="#ffffff"/>
<text x="1873.5" y="254" font-size="10" fill="#ffffff" textLength="32" lengthAdjust="spacingAndGlyphs">1.17270</text>
<rect x="1868" y="282" width="4" height="1" fill="#ffffff"/>
<text x="1873.5" y="286" font-size="10" fill="#ffffff" textLength="32" lengthAdjust="spacingAndGlyphs">1.17200</text>
<rect x="1868" y="314" width="4" height="1" fill="#ffffff"/>
<text x="1873.5" y="318" font-size="10" fill="#ffffff" textLength="32" lengthAdjust="spacingAndGlyphs">1.17130</text>
<rect x="1868" y="345" width="4" height="1" fill="#ffffff"/>
<text x="1873.5" y="349" font-size="10" fill="#ffffff" textLength="32" lengthAdjust="spacingAndGlyphs">1.17060</text>
<rect x="1868" y="376" width="4" height="1" fill="#ffffff"/>
<text x="1873.5" y="380" font-size="10" fill="#ffffff" textLength="32" lengthAdjust="spacingAndGlyphs">1.16990</text>
<rect x="1868" y="408" width="4" height="1" fill="#ffffff"/>
<text x="1873.5" y="412" font-size="10" fill="#ffffff" textLength="32" lengthAdjust="spacingAndGlyphs">1.16920</text>
<rect x="1868" y="440" width="4" height="1" fill="#ffffff"/>
<text x="1873.5" y="444" font-size="10" fill="#ffffff" textLength="32" lengthAdjust="spacingAndGlyphs">1.16850</text>
<rect x="1868" y="471" width="4" height="1" fill="#ffffff"/>
<text x="1873.5" y="475" font-size="10" fill="#ffffff" textLength="32" lengthAdjust="spacingAndGlyphs">1.16780</text>
<rect x="1868" y="502" width="4" height="1" fill="#ffffff"/>
<text x="1873.5" y="506" font-size="10" fill="#ffffff" textLength="32" lengthAdjust="spacingAndGlyphs">1.16710</text>
<rect x="1868" y="534" width="4" height="1" fill="#ffffff"/>
<text x="1873.5" y="538" font-size="10" fill="#ffffff" textLength="32" lengthAdjust="spacingAndGlyphs">1.16640</text>
<rect x="1868" y="566" width="4" height="1" fill="#ffffff"/>
<text x="1873.5" y="570" font-size="10" fill="#ffffff" textLength="32" lengthAdjust="spacingAndGlyphs">1.16570</text>
<rect x="1870" y="206" width="39" height="11" fill="#778899"/>
<text x="1873.5" y="215" font-size="10" fill="#000000" textLength="32" lengthAdjust="spacingAndGlyphs">1.17357</text>
<rect x="1868" y="636" width="4" height="1" fill="#ffffff"/>
<text x="1873" y="640" font-size="10" fill="#ffffff" textLength="43" lengthAdjust="spacingAndGlyphs">50.000000</text>
<rect x="1868" y="692" width="4" height="1" fill="#ffffff"/>
<text x="1873" y="696" font-size="10" fill="#ffffff" textLength="43" lengthAdjust="spacingAndGlyphs">25.000000</text>
<rect x="1868" y="802" width="4" height="1" fill="#ffffff"/>
<text x="1873" y="806" font-size="10" fill="#ffffff" textLength="46" lengthAdjust="spacingAndGlyphs">-25.000000</text>
<rect x="1868" y="858" width="4" height="1" fill="#ffffff"/>
<text x="1873" y="862" font-size="10" fill="#ffffff" textLength="46" lengthAdjust="spacingAndGlyphs">-50.000000</text>
<rect x="1868" y="600" width="4" height="1" fill="#ffffff"/>
<text x="1873" y="608" font-size="10" fill="#ffffff" textLength="43" lengthAdjust="spacingAndGlyphs">66.721705</text>
<rect x="1868" y="895" width="4" height="1" fill="#ffffff"/>
<text x="1873" y="893.3" font-size="10" fill="#ffffff" textLength="46" lengthAdjust="spacingAndGlyphs">-67.633534</text>
<rect x="1868" y="899" width="4" height="1" fill="#ffffff"/>
<text x="1873.5" y="900.6" font-size="10" fill="#ffffff" textLength="32" lengthAdjust="spacingAndGlyphs">0.00091</text>
<rect x="1868" y="902" width="4" height="1" fill="#ffffff"/>
<text x="1873.5" y="907.3" font-size="10" fill="#ffffff" textLength="32" lengthAdjust="spacingAndGlyphs">0.00196</text>
<rect x="2" y="904" width="1" height="4" fill="#ffffff"/>
<text x="2" y="916" font-size="10" fill="#ffffff" textLength="51" lengthAdjust="spacingAndGlyphs">25 Sep 2025</text>
<rect x="66" y="904" width="1" height="4" fill="#ffffff"/>
<text x="66" y="916" font-size="10" fill="#ffffff" textLength="54" lengthAdjust="spacingAndGlyphs">26 Sep 02:00</text>
<rect x="130" y="904" width="1" height="4" fill="#ffffff"/>
<text x="130" y="916" font-size="10" fill="#ffffff" textLength="54" lengthAdjust="spacingAndGlyphs">26 Sep 06:00</text>
<rect x="194" y="904" width="1" height="4" fill="#ffffff"/>
<text x="194" y="916" font-size="10" fill="#ffffff" textLength="54" lengthAdjust="spacingAndGlyphs">26 Sep 10:00</text>
<rect x="258" y="904" width="1" height="4" fill="#ffffff"/>
<text x="258" y="916" font-size="10" fill="#ffffff" textLength="54" lengthAdjust="spacingAndGlyphs">26 Sep 14:00</text>
<rect x="322" y="904" width="1" height="4" fill="#ffffff"/>
<text x="322" y="916" font-size="10" fill="#ffffff" textLength="54" lengthAdjust="spacingAndGlyphs">26 Sep 18:00</text>
<rect x="386" y="904" width="1" height="4" fill="#ffffff"/>
<text x="386" y="916" font-size="10" fill="#ffffff" textLength="54" lengthAdjust="spacingAndGlyphs">26 Sep 22:00</text>
<rect x="450" y="904" width="1" height="4" fill="#ffffff"/>
<text x="450" y="916" font-size="10" fill="#ffffff" textLength="54" lengthAdjust="spacingAndGlyphs">29 Sep 02:00</text>
<rect x="514" y="904" width="1" height="4" fill="#ffffff"/>
<text x="514" y="916" font-size="10" fill="#ffffff" textLength="54" lengthAdjust="spacingAndGlyphs">29 Sep 06:00</text>
<rect x="578" y="904" width="1" height="4" fill="#ffffff"/>
<text x="578" y="916" font-size="10" fill="#ffffff" textLength="54" lengthAdjust="spacingAndGlyphs">29 Sep 10:00</text>
<rect x="642" y="904" width="1" height="4" fill="#ffffff"/>
<text x="642" y="916" font-size="10" fill="#ffffff" textLength="54" lengthAdjust="spacingAndGlyphs">29 Sep 14:00</text>
<rect x="706" y="904" width="1" height="4" fill="#ffffff"/>
<text x="706" y="916" font-size="10" fill="#ffffff" textLength="54" lengthAdjust="spacingAndGlyphs">29 Sep 18:00</text>
<rect x="770" y="904" width="1" height="4" fill="#ffffff"/>
<text x="770" y="916" font-size="10" fill="#ffffff" textLength="54" lengthAdjust="spacingAndGlyphs">29 Sep 22:00</text>
<rect x="834" y="904" width="1" height="4" fill="#ffffff"/>
<text x="834" y="916" font-size="10" fill="#ffffff" textLength="54" lengthAdjust="spacingAndGlyphs">30 Sep 02:00</text>
<rect x="898" y="904" width="1" height="4" fill="#ffffff"/>
<text x="898" y="916" font-size="10" fill="#ffffff" textLength="54" lengthAdjust="spacingAndGlyphs">30 Sep 06:00</text>
<rect x="962" y="904" width="1" height="4" fill="#ffffff"/>
<text x="962" y="916" font-size="10" fill="#ffffff" textLength="54" lengthAdjust="spacingAndGlyphs">30 Sep 10:00</text>
<rect x="1026" y="904" width="1" height="4" fill="#ffffff"/>
<text x="1026" y="916" font-size="10" fill="#ffffff" textLength="54" lengthAdjust="spacingAndGlyphs">30 Sep 14:00</text>
<rect x="1090" y="904" width="1" height="4" fill="#ffffff"/>
<text x="1090" y="916" font-size="10" fill="#ffffff" textLength="54" lengthAdjust="spacingAndGlyphs">30 Sep 18:00</text>
<rect x="1154" y="904" width="1" height="4" fill="#ffffff"/>
<text x="1154" y="916" font-size="10" fill="#ffffff" textLength="54" lengthAdjust="spacingAndGlyphs">30 Sep 22:00</text>
<rect x="1218" y="904" width="1" height="4" fill="#ffffff"/>
<text x="1218" y="916" font-size="10" fill="#ffffff" textLength="48" lengthAdjust="spacingAndGlyphs">1 Oct 02:00</text>
<rect x="1282" y="904" width="1" height="4" fill="#ffffff"/>
<text x="1282" y="916" font-size="10" fill="#ffffff" textLength="48" lengthAdjust="spacingAndGlyphs">1 Oct 06:00</text>
<rect x="1346" y="904" width="1" height="4" fill="#ffffff"/>
<text x="1346" y="916" font-size="10" fill="#ffffff" textLength="48" lengthAdjust="spacingAndGlyphs">1 Oct 10:00</text>
<rect x="1410" y="904" width="1" height="4" fill="#ffffff"/>
<text x="1410" y="916" font-size="10" fill="#ffffff" textLength="48" lengthAdjust="spacingAndGlyphs">1 Oct 14:00</text>
<rect x="1474" y="904" width="1" height="4" fill="#ffffff"/>
<text x="1474" y="916" font-size="10" fill="#ffffff" textLength="48" lengthAdjust="spacingAndGlyphs">1 Oct 18:00</text>
<rect x="1538" y="904" width="1" height="4" fill="#ffffff"/>
<text x="1538" y="916" font-size="10" fill="#ffffff" textLength="48" lengthAdjust="spacingAndGlyphs">1 Oct 22:00</text>
<rect x="1602" y="904" width="1" height="4" fill="#ffffff"/>
<text x="1602" y="916" font-size="10" fill="#ffffff" textLength="48" lengthAdjust="spacingAndGlyphs">2 Oct 02:00</text>
<rect x="1666" y="904" width="1" height="4" fill="#ffffff"/>
<text x="1666" y="916" font-size="10" fill="#ffffff" textLength="48" lengthAdjust="spacingAndGlyphs">2 Oct 06:00</text>
<text x="6.5" y="13" font-size="10" fill="#ffffff" textLength="60" lengthAdjust="spacingAndGlyphs">EURUSD.s,H1</text>
<text x="74.5" y="13" font-size="10" fill="#ffffff" textLength="140.5" lengthAdjust="spacingAndGlyphs">1.17368 1.17376 1.17357 1.17357</text>
<text x="6" y="612" font-size="10" fill="#ffffff" textLength="29" lengthAdjust="spacingAndGlyphs">FOTSI</text>
</svg>
<div class="panel" id="p1" style="left:23px;top:33px;width:400px;height:550px">
<div class="hd" style="height:73px"></div>
<i class="dot"></i>
<div class="sect" style="top:85px"><i class="tri"></i></div>
<div class="sect" style="top:194px"><i class="tri"></i></div>
<div class="sect" style="top:458px"><i class="tri"></i></div>
<div class="track" style="top:227px"></div><div class="bar b" style="top:225px;width:111px"></div>
<div class="track" style="top:255px"></div><div class="bar b" style="top:253px;width:116px"></div>
<div class="track" style="top:283px"></div><div class="bar b" style="top:281px;width:146px"></div>
<div class="track" style="top:311px"></div><div class="bar y" style="top:309px;width:97px"></div>
<div class="track" style="top:339px"></div><div class="bar o" style="top:337px;width:172px"></div>
<div class="track" style="top:367px"></div><div class="bar b" style="top:365px;width:134px"></div>
<div class="track" style="top:395px"></div><div class="bar y" style="top:393px;width:81px"></div>
<div class="track" style="top:423px"></div><div class="bar o" style="top:421px;width:186px"></div>
<svg class="ic" style="left:24.5px;top:119.5px" width="15" height="17.8" viewBox="0 0 16 19"><path d="M2.6 0.6 H13.4 V2.7 H2.6 Z" fill="none" stroke="#e2e5f0" stroke-width="1"/><path d="M3.8 2.7 L4.8 5.2 M12.2 2.7 L11.2 5.2 M4.3 3.9 H11.7" fill="none" stroke="#e2e5f0" stroke-width=".9" opacity=".85"/><circle cx="8" cy="11.6" r="6.9" fill="none" stroke="#e2e5f0" stroke-width="1.1"/><text x="8" y="15.2" font-size="10" text-anchor="middle" fill="#e2e5f0" font-family="Liberation Sans, sans-serif">$</text></svg>
<svg class="ic" style="left:25px;top:143px" width="16" height="16" viewBox="0 0 16 16" shape-rendering="crispEdges"><rect x=".5" y=".5" width="15" height="15" fill="none" stroke="#3cb371"/><rect x="2" y="5" width="3" height="10" fill="#3cb371"/><rect x="6.5" y="8" width="3" height="7" fill="#3cb371"/><rect x="11" y="2.5" width="3" height="12.5" fill="#3cb371"/></svg>
<svg class="ic" style="left:25px;top:165px" width="16" height="16" viewBox="0 0 16 16"><rect x=".5" y=".5" width="15" height="15" fill="none" stroke="#3cb371" shape-rendering="crispEdges"/><rect x="1" y="13" width="14" height="1" fill="#3cb371" opacity=".65" shape-rendering="crispEdges"/><path d="M1 11.6 L3.6 9.9 L5.6 12.3 L15 2.8" fill="none" stroke="#3cb371" stroke-width="1.15"/></svg>
<svg class="ic" style="left:14px;top:528px" width="11" height="11" viewBox="0 0 11 11"><circle cx="5.5" cy="5.5" r="4.6" fill="none" stroke="#8a8fa0" stroke-width="1.1"/><path d="M5.5 3 V5.8 H7" fill="none" stroke="#8a8fa0" stroke-width="1"/></svg>
<span class="t" id="t0" style="left:13.12px;top:8.00px;font-size:21px;color:#ffe08c;transform:scaleX(0.9548);">ZAR Wave EA v1.01</span>
<span class="t" id="t1" style="left:12.13px;top:35.00px;font-size:15px;color:#b4c4f8;letter-spacing:-0.053px;">FOTSI Multi-Symbol Trading</span>
<span class="t" id="t2" style="left:24.84px;top:56.00px;font-size:12px;color:#55ee55;letter-spacing:-0.105px;">ACTIVO</span>
<span class="t" id="t3" style="left:30.32px;top:91.00px;font-size:15px;color:#d6defc;letter-spacing:0.501px;">Account Information</span>
<span class="t" id="t4" style="left:43.60px;top:120.00px;font-size:15px;color:#e2e5f0;transform:scaleX(0.9502);">Balance: $10000.00</span>
<span class="t" id="t5" style="left:45.84px;top:142.00px;font-size:15px;color:#3cb371;transform:scaleX(0.9580);">Free Margin: $9878.81</span>
<span class="t" id="t6" style="left:45.86px;top:164.00px;font-size:15px;color:#3cb371;letter-spacing:-0.054px;">Daily P&amp;L: $21.30 (-4.3% of limit)</span>
<span class="t" id="t7" style="left:29.22px;top:200.00px;font-size:15px;color:#d6defc;letter-spacing:-0.137px;">FOTSI Values</span>
<span class="t" id="t8" style="left:29.62px;top:464.00px;font-size:15px;color:#d6defc;letter-spacing:0.335px;">Risk Management</span>
<span class="t" id="t9" style="left:22.10px;top:494.00px;font-size:14.5px;color:#e2e5f0;letter-spacing:-0.082px;">Consecutive Days Protection: DISABLED</span>
<span class="t" id="t10" style="left:26.96px;top:524.00px;font-size:12px;color:#8a8fa0;transform:scaleX(0.9498);">Updated: 06:07:10</span>
<span class="t" id="t29" style="left:22.77px;top:230.00px;font-size:9px;color:#e2e5f0;">EU</span>
<span class="t" id="t30" style="left:38.60px;top:227.00px;font-size:12px;color:#e2e5f0;letter-spacing:0.006px;">EUR</span>
<span class="t" id="t31" style="left:208.81px;top:231.00px;font-size:14.5px;color:#ffffff;-webkit-text-stroke:0.38px;letter-spacing:0.177px;">-17.45</span>
<span class="t" id="t32" style="left:22.77px;top:258.00px;font-size:9px;color:#e2e5f0;">US</span>
<span class="t" id="t33" style="left:39.53px;top:255.00px;font-size:12px;color:#e2e5f0;letter-spacing:-0.094px;">USD</span>
<span class="t" id="t34" style="left:208.81px;top:259.00px;font-size:14.5px;color:#ffffff;-webkit-text-stroke:0.38px;letter-spacing:0.151px;">-13.43</span>
<span class="t" id="t35" style="left:22.82px;top:286.00px;font-size:9px;color:#e2e5f0;">GB</span>
<span class="t" id="t36" style="left:40.34px;top:283.00px;font-size:12px;color:#e2e5f0;transform:scaleX(0.9136);">GBP</span>
<span class="t" id="t37" style="left:208.27px;top:287.00px;font-size:14.5px;color:#ffffff;-webkit-text-stroke:0.38px;letter-spacing:0.709px;">8.27</span>
<span class="t" id="t38" style="left:22.82px;top:314.00px;font-size:9px;color:#e2e5f0;">CH</span>
<span class="t" id="t39" style="left:40.82px;top:311.00px;font-size:12px;color:#e2e5f0;transform:scaleX(0.9443);">CHF</span>
<span class="t" id="t40" style="left:208.81px;top:315.00px;font-size:14.5px;color:#ffffff;-webkit-text-stroke:0.38px;letter-spacing:0.090px;">-28.14</span>
<span class="t" id="t41" style="left:22.94px;top:342.00px;font-size:9px;color:#e2e5f0;">JP</span>
<span class="t" id="t42" style="left:36.88px;top:339.00px;font-size:12px;color:#e2e5f0;transform:scaleX(0.8670);">JPY</span>
<span class="t" id="t43" style="left:207.61px;top:343.00px;font-size:14.5px;color:#ffffff;-webkit-text-stroke:0.38px;letter-spacing:0.827px;">27.65</span>
<span class="t" id="t44" style="left:23.12px;top:370.00px;font-size:9px;color:#e2e5f0;">AU</span>
<span class="t" id="t45" style="left:40.46px;top:367.00px;font-size:12px;color:#e2e5f0;letter-spacing:-0.023px;">AUD</span>
<span class="t" id="t46" style="left:208.81px;top:371.00px;font-size:14.5px;color:#ffffff;-webkit-text-stroke:0.38px;letter-spacing:0.439px;">-0.49</span>
<span class="t" id="t47" style="left:22.82px;top:398.00px;font-size:9px;color:#e2e5f0;">CA</span>
<span class="t" id="t48" style="left:38.84px;top:395.00px;font-size:12px;color:#e2e5f0;letter-spacing:-0.269px;">CAD</span>
<span class="t" id="t49" style="left:208.81px;top:399.00px;font-size:14.5px;color:#ffffff;-webkit-text-stroke:0.38px;letter-spacing:0.334px;">-39.66</span>
<span class="t" id="t50" style="left:22.67px;top:426.00px;font-size:9px;color:#e2e5f0;">NZ</span>
<span class="t" id="t51" style="left:41.10px;top:423.00px;font-size:12px;color:#e2e5f0;letter-spacing:0.337px;">NZD</span>
<span class="t" id="t52" style="left:207.85px;top:427.00px;font-size:14.5px;color:#ffffff;-webkit-text-stroke:0.38px;letter-spacing:0.861px;">38.50</span>
</div>
<div class="panel" id="p2" style="left:443px;top:33px;width:380px;height:269px">
<div class="hd" style="height:48px"></div>
<svg class="ic" style="left:15px;top:61px" width="17" height="17" viewBox="0 0 16 16" shape-rendering="crispEdges"><rect x=".5" y=".5" width="15" height="15" fill="none" stroke="#b4c4f8"/><rect x="2" y="5" width="3" height="10" fill="#b4c4f8"/><rect x="6.5" y="8" width="3" height="7" fill="#b4c4f8"/><rect x="11" y="2.5" width="3" height="12.5" fill="#b4c4f8"/></svg>
<svg class="ic" style="left:14.6px;top:135px" width="15.6" height="18.6" viewBox="0 0 16 19"><path d="M2.6 0.6 H13.4 V2.7 H2.6 Z" fill="none" stroke="#b4c4f8" stroke-width="1"/><path d="M3.8 2.7 L4.8 5.2 M12.2 2.7 L11.2 5.2 M4.3 3.9 H11.7" fill="none" stroke="#b4c4f8" stroke-width=".9" opacity=".85"/><circle cx="8" cy="11.6" r="6.9" fill="none" stroke="#b4c4f8" stroke-width="1.1"/><text x="8" y="15.2" font-size="10" text-anchor="middle" fill="#b4c4f8" font-family="Liberation Sans, sans-serif">$</text></svg>
<svg class="ic" style="left:15px;top:190.2px" width="13.8" height="17.6" viewBox="0 0 15 18"><path d="M7.5 0.8 C5.5 2.2 3 2.6 1 2.6 C1 9 2.5 14 7.5 17.2 C12.5 14 14 9 14 2.6 C12 2.6 9.5 2.2 7.5 0.8 Z" fill="none" stroke="#b4c4f8" stroke-width="1.1"/><path d="M7.5 3 C6.2 3.9 4.6 4.3 3.2 4.4 C3.3 9 4.4 12.6 7.5 14.8 Z" fill="#b4c4f8" opacity=".9"/><path d="M7.5 3 C8.8 3.9 10.4 4.3 11.8 4.4 C11.7 9 10.6 12.6 7.5 14.8" fill="none" stroke="#b4c4f8" stroke-width=".8"/></svg>
<span class="t" id="t11" style="left:13.22px;top:7.00px;font-size:18px;color:#ffe08c;-webkit-text-stroke:0.38px;letter-spacing:0.789px;">EA Configuration</span>
<span class="t" id="t12" style="left:38.48px;top:61.00px;font-size:15.5px;color:#b4c4f8;-webkit-text-stroke:0.38px;transform:scaleX(0.9556);">FOTSI Levels</span>
<span class="t" id="t13" style="left:22.96px;top:86.00px;font-size:12.5px;color:#e2e5f0;letter-spacing:0.303px;">Overbought: 50.0</span>
<span class="t" id="t14" style="left:197.74px;top:86.00px;font-size:12.5px;color:#e2e5f0;letter-spacing:0.269px;">Oversold: -50.0</span>
<span class="t" id="t15" style="left:22.52px;top:106.00px;font-size:12.5px;color:#e2e5f0;letter-spacing:0.222px;">Min. Difference: 75.0</span>
<span class="t" id="t16" style="left:35.85px;top:136.00px;font-size:15.5px;color:#b4c4f8;-webkit-text-stroke:0.38px;letter-spacing:0.693px;">Lot Configuration</span>
<span class="t" id="t17" style="left:23.18px;top:161.00px;font-size:12.5px;color:#e2e5f0;letter-spacing:-0.041px;">Type: Risk %</span>
<span class="t" id="t18" style="left:197.48px;top:161.00px;font-size:12.5px;color:#e2e5f0;transform:scaleX(0.9747);">Risk: 5.00%</span>
<span class="t" id="t19" style="left:33.41px;top:191.00px;font-size:15.5px;color:#b4c4f8;-webkit-text-stroke:0.38px;letter-spacing:0.255px;">Risk Settings</span>
<span class="t" id="t20" style="left:22.55px;top:216.00px;font-size:12.5px;color:#e2e5f0;letter-spacing:-0.045px;">SL: ATR×5.0</span>
<span class="t" id="t21" style="left:198.02px;top:216.00px;font-size:12.5px;color:#e2e5f0;letter-spacing:0.072px;">TP: 200 pips</span>
<span class="t" id="t22" style="left:22.88px;top:236.00px;font-size:12.5px;color:#e2e5f0;transform:scaleX(0.8921);">TSL: OFF</span>
<span class="t" id="t23" style="left:197.36px;top:236.00px;font-size:12.5px;color:#e2e5f0;letter-spacing:0.042px;">Daily Loss Limit: 5.0%</span>
</div>
<div class="panel" id="p3" style="left:443px;top:323px;width:380px;height:114px">
<div class="hd" style="height:48px"></div>
<span class="t" id="t24" style="left:12.92px;top:7.00px;font-size:18px;color:#ffe08c;-webkit-text-stroke:0.38px;letter-spacing:0.480px;">Open Positions</span>
<span class="t" id="t25" style="left:13.33px;top:28.00px;font-size:13px;color:#c4ceff;letter-spacing:0.173px;">Total: 3/10</span>
<span class="t" id="t26" style="left:12.86px;top:59.00px;font-size:12px;color:#3cb371;transform:scaleX(0.9035);">USDJPY.s BUY $+5.04</span>
<span class="t" id="t27" style="left:197.70px;top:59.00px;font-size:12px;color:#3cb371;transform:scaleX(0.9020);">GBPCAD.s SELL $+19.97</span>
<span class="t" id="t28" style="left:13.34px;top:81.00px;font-size:12px;color:#3cb371;transform:scaleX(0.9162);">CADJPY.s BUY $+0.42</span>
</div>
</body></html>
